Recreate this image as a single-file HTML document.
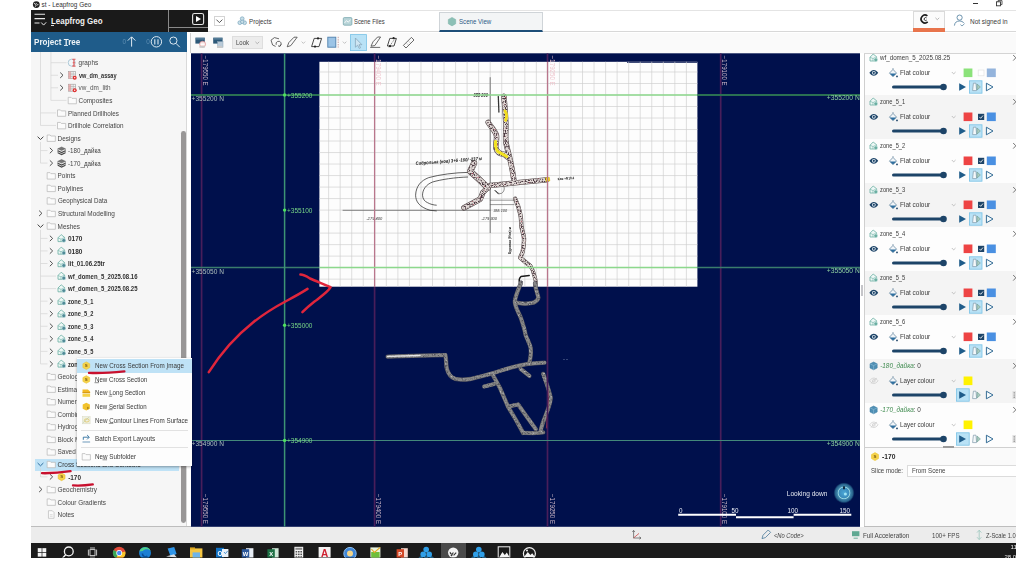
<!DOCTYPE html>
<html><head><meta charset="utf-8"><title>st - Leapfrog Geo</title>
<style>
html,body{margin:0;padding:0;background:#fff;}
body{width:1024px;height:574px;position:relative;overflow:hidden;font-family:"Liberation Sans",sans-serif;}
.t{position:absolute;white-space:nowrap;line-height:1;transform-origin:0 50%;}
.b{position:absolute;box-sizing:border-box;}
svg{position:absolute;left:0;top:0;overflow:visible;}
#wrap{position:absolute;left:0;top:0;width:1024px;height:574px;overflow:hidden;filter:blur(0.25px);}
</style></head><body><div id="wrap">

<div class="b" style="left:31.00px;top:0.00px;width:985.00px;height:10.30px;background:#ffffff;"></div>
<svg width="1024" height="574"><circle cx="36.3" cy="4.6" r="3.4" fill="#222"/><path d="M34.5 3.2a1 1 0 1 0 2 0.2M36.8 5.6l1.5-1.6M35 6.5l1.2-1" stroke="#fff" stroke-width="0.9" fill="none"/></svg>
<div class="t" style="left:41.50px;top:2.27px;font-size:6.4px;color:#333;">st - Leapfrog Geo</div>
<div class="b" style="left:972.60px;top:3.00px;width:5.00px;height:0.90px;background:#333;"></div>
<svg width="1024" height="574"><rect x="996.5" y="1.8" width="4" height="4" fill="none" stroke="#333" stroke-width="0.9"/><path d="M998 1.8v-1.2h4v4h-1.4" fill="none" stroke="#333" stroke-width="0.8"/></svg>
<div class="b" style="left:31.00px;top:10.00px;width:985.00px;height:22.40px;background:#ffffff;border-top:1px solid #e4e4e4;border-bottom:1px solid #d8d8d8;"></div>
<div class="b" style="left:31.00px;top:10.00px;width:177.40px;height:22.00px;background:#1a1a1a;"></div>
<div class="b" style="left:168.00px;top:10.00px;width:1.00px;height:22.00px;background:#8a8a8a;"></div>
<div class="b" style="left:168.00px;top:27.30px;width:40.40px;height:1.00px;background:#8a8a8a;"></div>
<svg width="1024" height="574"><path d="M34.5 14.3h10.5M34.5 18.6h10.5M34.5 23h5" stroke="#e8e8e8" stroke-width="1.1" fill="none"/><path d="M41.2 22.5l2.4 2.6l2.6-2.8" stroke="#e8e8e8" stroke-width="1" fill="none"/></svg>
<div class="t" style="left:50.80px;top:17.21px;font-size:9px;color:#f2f2f2;font-weight:bold;transform:scaleX(0.8803);">Leapfrog Geo</div>
<div class="b" style="left:51.00px;top:24.80px;width:3.20px;height:0.80px;background:#ddd;"></div>
<svg width="1024" height="574"><rect x="192.6" y="13.5" width="11" height="11" rx="1.8" fill="none" stroke="#e6e6e6" stroke-width="1.1"/><path d="M196 15.9v6.2l5-3.1z" fill="#fff"/></svg>
<div class="b" style="left:213.60px;top:16.20px;width:11.60px;height:9.60px;background:#fff;border:1px solid #d4d4d4;"></div>
<svg width="1024" height="574"><path d="M216.4 19.6l3 3l3-3" stroke="#444" stroke-width="0.9" fill="none"/></svg>
<svg width="1024" height="574"><g fill="#c9dfe8" stroke="#6a9ab5" stroke-width="0.6"><circle cx="242.2" cy="18.7" r="1.9"/><circle cx="239.8" cy="22.7" r="1.9"/><circle cx="244.6" cy="22.7" r="1.9"/><circle cx="242.2" cy="21.8" r="1.7"/></g></svg>
<div class="t" style="left:249.40px;top:18.87px;font-size:6.4px;color:#3a3a3a;transform:scaleX(0.9775);">Projects</div>
<svg width="1024" height="574"><rect x="343.3" y="17.6" width="8.6" height="7.6" rx="1" fill="#b8d4d8" stroke="#6fa0a8" stroke-width="0.7"/><path d="M344.5 23l2-2.4l1.8 1.6l2.2-2.6" stroke="#fff" stroke-width="0.8" fill="none"/></svg>
<div class="t" style="left:354.20px;top:18.87px;font-size:6.4px;color:#3a3a3a;transform:scaleX(0.9151);">Scene Files</div>
<div class="b" style="left:439.00px;top:12.00px;width:104.40px;height:20.00px;background:#f3f5f6;border:1px solid #cfd4d8;border-bottom:2px solid #1d4e78;"></div>
<svg width="1024" height="574"><path d="M452 17.4l3.7 2.1v4.3l-3.7 2.1l-3.7-2.1v-4.3z" fill="#8cc0b6" stroke="#78b0a6" stroke-width="0.5"/></svg>
<div class="t" style="left:458.80px;top:18.87px;font-size:6.4px;color:#2d5a85;transform:scaleX(0.9590);">Scene View</div>
<div class="b" style="left:913.00px;top:10.60px;width:31.60px;height:21.40px;background:#fbfbfb;border:1px solid #dadada;border-bottom:none;"></div>
<div class="b" style="left:913.00px;top:27.80px;width:31.60px;height:4.00px;background:#e8744c;"></div>
<svg width="1024" height="574"><path d="M927.4 15.9a3.9 3.9 0 1 0 0.3 6" stroke="#1c1c1c" stroke-width="1.7" fill="none"/><path d="M926.6 17.9a1.5 1.5 0 1 0 0.1 2.2" stroke="#1c1c1c" stroke-width="0.9" fill="none"/><path d="M935.4 17.8l1.9 1.9l1.9-1.9" stroke="#999" stroke-width="0.7" fill="none"/></svg>
<svg width="1024" height="574"><circle cx="959.6" cy="17.6" r="2.6" fill="none" stroke="#4a7a9a" stroke-width="0.8"/><path d="M954.4 25.6c0.4-3.4 2.4-4.6 5.2-4.6c2 0 3.4 0.8 4.2 2" fill="none" stroke="#4a7a9a" stroke-width="0.8"/><path d="M960.4 24.6l1.6 1.4l2.6-2.4" fill="none" stroke="#4a7a9a" stroke-width="0.7"/></svg>
<div class="t" style="left:970.40px;top:18.57px;font-size:6.4px;color:#3a3a3a;transform:scaleX(1.0065);">Not signed in</div>
<div class="b" style="left:31.00px;top:32.00px;width:156.00px;height:20.00px;background:#1f5c8a;"></div>
<div class="t" style="left:34.40px;top:38.45px;font-size:8.4px;color:#eef4f8;font-weight:bold;transform:scaleX(0.9648);">Project Tree</div>
<div class="b" style="left:63.80px;top:45.40px;width:4.00px;height:0.80px;background:#cfe0ec;"></div>
<div class="t" style="left:122.60px;top:39.47px;font-size:6.4px;color:#5f8fb3;">0</div>
<div class="t" style="left:146.20px;top:39.47px;font-size:6.4px;color:#5f8fb3;">0</div>
<svg width="1024" height="574"><g stroke="#dfeaf2" fill="none" stroke-width="1"><path d="M131.6 46.6v-9.6M127.8 40.6l3.8-3.8l3.8 3.8"/><circle cx="156.4" cy="41.8" r="5.2"/><path d="M154.8 39.2v5.2M158 39.2v5.2" stroke-width="1.1"/><circle cx="173.4" cy="40.6" r="3.6"/><path d="M176 43.4l3.8 3.8"/></g></svg>
<div class="b" style="left:31.00px;top:52.00px;width:156.00px;height:475.00px;background:#f6f6f6;"></div>
<div class="b" style="left:186.40px;top:52.00px;width:1.00px;height:475.00px;background:#d9d9d9;"></div>
<div class="b" style="left:187.40px;top:32.00px;width:3.00px;height:495.00px;background:#ffffff;"></div>
<div class="b" style="left:181.00px;top:131.00px;width:5.00px;height:392.00px;background:#999797;border-radius:2.4px;"></div>
<div class="b" style="left:31.00px;top:526.00px;width:160.00px;height:1.20px;background:#bdbdbd;"></div>
<div class="b" style="left:34.60px;top:459.00px;width:144.60px;height:11.80px;background:#bfe2f6;"></div>
<div class="t" style="left:78.60px;top:60.37px;font-size:6.4px;color:#444;">graphs</div>
<div class="t" style="left:78.60px;top:72.92px;font-size:6.4px;color:#303030;font-weight:bold;transform:scaleX(0.8733);">vw_dm_assay</div>
<div class="t" style="left:78.60px;top:85.47px;font-size:6.4px;color:#555;">vw_dm_lith</div>
<div class="t" style="left:78.60px;top:98.02px;font-size:6.4px;color:#444;">Composites</div>
<div class="t" style="left:68.20px;top:110.57px;font-size:6.4px;color:#444;transform:scaleX(0.9886);">Planned Drillholes</div>
<div class="t" style="left:68.20px;top:123.12px;font-size:6.4px;color:#444;transform:scaleX(0.9911);">Drillhole Correlation</div>
<div class="t" style="left:57.60px;top:135.67px;font-size:6.4px;color:#444;">Designs</div>
<div class="t" style="left:68.20px;top:148.22px;font-size:6.4px;color:#444;transform:scaleX(0.9722);">-180_дайка</div>
<div class="t" style="left:68.20px;top:160.77px;font-size:6.4px;color:#444;transform:scaleX(0.9722);">-170_дайка</div>
<div class="t" style="left:57.60px;top:173.32px;font-size:6.4px;color:#444;">Points</div>
<div class="t" style="left:57.60px;top:185.87px;font-size:6.4px;color:#444;">Polylines</div>
<div class="t" style="left:57.60px;top:198.42px;font-size:6.4px;color:#444;transform:scaleX(0.9739);">Geophysical Data</div>
<div class="t" style="left:57.60px;top:210.97px;font-size:6.4px;color:#444;transform:scaleX(1.0078);">Structural Modelling</div>
<div class="t" style="left:57.60px;top:223.52px;font-size:6.4px;color:#444;">Meshes</div>
<div class="t" style="left:68.20px;top:236.07px;font-size:6.4px;color:#303030;font-weight:bold;transform:scaleX(1.0114);">0170</div>
<div class="t" style="left:68.20px;top:248.62px;font-size:6.4px;color:#303030;font-weight:bold;transform:scaleX(1.0114);">0180</div>
<div class="t" style="left:68.20px;top:261.17px;font-size:6.4px;color:#303030;font-weight:bold;transform:scaleX(0.9541);">lit_01.06.25tr</div>
<div class="t" style="left:68.20px;top:273.72px;font-size:6.4px;color:#303030;font-weight:bold;transform:scaleX(0.9360);">wf_domen_5_2025.08.16</div>
<div class="t" style="left:68.20px;top:286.27px;font-size:6.4px;color:#303030;font-weight:bold;transform:scaleX(0.9360);">wf_domen_5_2025.08.25</div>
<div class="t" style="left:68.20px;top:298.82px;font-size:6.4px;color:#303030;font-weight:bold;transform:scaleX(0.8849);">zone_5_1</div>
<div class="t" style="left:68.20px;top:311.37px;font-size:6.4px;color:#303030;font-weight:bold;transform:scaleX(0.8849);">zone_5_2</div>
<div class="t" style="left:68.20px;top:323.92px;font-size:6.4px;color:#303030;font-weight:bold;transform:scaleX(0.8849);">zone_5_3</div>
<div class="t" style="left:68.20px;top:336.47px;font-size:6.4px;color:#303030;font-weight:bold;transform:scaleX(0.8849);">zone_5_4</div>
<div class="t" style="left:68.20px;top:349.02px;font-size:6.4px;color:#303030;font-weight:bold;transform:scaleX(0.8849);">zone_5_5</div>
<div class="t" style="left:68.20px;top:361.57px;font-size:6.4px;color:#303030;font-weight:bold;transform:scaleX(0.8849);">zone_5_6</div>
<div class="t" style="left:57.60px;top:374.12px;font-size:6.4px;color:#444;">Geological Models</div>
<div class="t" style="left:57.60px;top:386.67px;font-size:6.4px;color:#444;">Estimation</div>
<div class="t" style="left:57.60px;top:399.22px;font-size:6.4px;color:#444;">Numeric Models</div>
<div class="t" style="left:57.60px;top:411.77px;font-size:6.4px;color:#444;">Combined Models</div>
<div class="t" style="left:57.60px;top:424.32px;font-size:6.4px;color:#444;">Hydrogeology</div>
<div class="t" style="left:57.60px;top:436.87px;font-size:6.4px;color:#444;">Block Models</div>
<div class="t" style="left:57.60px;top:449.42px;font-size:6.4px;color:#444;">Saved Scenes and Movies</div>
<div class="t" style="left:57.60px;top:461.97px;font-size:6.4px;color:#333;">Cross Sections and Contours</div>
<div class="t" style="left:68.20px;top:474.52px;font-size:6.4px;color:#303030;font-weight:bold;">-170</div>
<div class="t" style="left:57.60px;top:487.07px;font-size:6.4px;color:#444;">Geochemistry</div>
<div class="t" style="left:57.60px;top:499.62px;font-size:6.4px;color:#444;">Colour Gradients</div>
<div class="t" style="left:57.60px;top:512.17px;font-size:6.4px;color:#444;">Notes</div>
<svg width="1024" height="574"><path d="M40.50 52.00V125.45" stroke="#d4d4d4" stroke-width="0.7"/><path d="M40.50 112.90H56.00" stroke="#d4d4d4" stroke-width="0.7"/><path d="M40.50 125.45H56.00" stroke="#d4d4d4" stroke-width="0.7"/><path d="M50.90 52.00V100.35" stroke="#d4d4d4" stroke-width="0.7"/><path d="M50.90 62.70H66.50" stroke="#d4d4d4" stroke-width="0.7"/><path d="M50.90 75.25H58.00" stroke="#d4d4d4" stroke-width="0.7"/><path d="M50.90 87.80H58.00" stroke="#d4d4d4" stroke-width="0.7"/><path d="M50.90 100.35H66.50" stroke="#d4d4d4" stroke-width="0.7"/><path d="M40.50 142.00V163.10" stroke="#d4d4d4" stroke-width="0.7"/><path d="M40.50 150.55H47.50" stroke="#d4d4d4" stroke-width="0.7"/><path d="M40.50 163.10H47.50" stroke="#d4d4d4" stroke-width="0.7"/><path d="M40.50 229.85V363.90" stroke="#d4d4d4" stroke-width="0.7"/><path d="M40.50 238.40H47.50" stroke="#d4d4d4" stroke-width="0.7"/><path d="M40.50 250.95H47.50" stroke="#d4d4d4" stroke-width="0.7"/><path d="M40.50 263.50H47.50" stroke="#d4d4d4" stroke-width="0.7"/><path d="M40.50 276.05H56.00" stroke="#d4d4d4" stroke-width="0.7"/><path d="M40.50 288.60H56.00" stroke="#d4d4d4" stroke-width="0.7"/><path d="M40.50 301.15H47.50" stroke="#d4d4d4" stroke-width="0.7"/><path d="M40.50 313.70H47.50" stroke="#d4d4d4" stroke-width="0.7"/><path d="M40.50 326.25H47.50" stroke="#d4d4d4" stroke-width="0.7"/><path d="M40.50 338.80H47.50" stroke="#d4d4d4" stroke-width="0.7"/><path d="M40.50 351.35H47.50" stroke="#d4d4d4" stroke-width="0.7"/><path d="M40.50 363.90H47.50" stroke="#d4d4d4" stroke-width="0.7"/><path d="M40.50 468.30V476.85" stroke="#d4d4d4" stroke-width="0.7"/><path d="M40.50 476.85H47.50" stroke="#d4d4d4" stroke-width="0.7"/><circle cx="71.70" cy="62.70" r="3.5" fill="#f2f6f8" stroke="#8fb4c8" stroke-width="0.7"/><path d="M73.90 59.30v6.8M72.30 59.30h3.2M72.30 66.10h3.2M72.70 62.70h2.4" stroke="#e06060" stroke-width="1.1" fill="none"/><path d="M60.20 72.55l2.8 2.7l-2.8 2.7" stroke="#4a4a4a" stroke-width="0.95" fill="none"/><rect x="68.50" y="71.65" width="7" height="7" fill="#f4f4f4" stroke="#9a9a9a" stroke-width="0.6"/><path d="M68.50 74.05h7M68.50 76.35h7M70.80 71.65v7M73.20 71.65v7" stroke="#9a9a9a" stroke-width="0.5"/><rect x="68.50" y="71.65" width="2.3" height="7" fill="#e7a0a0" opacity="0.8"/><circle cx="74.70" cy="77.65" r="2" fill="#e03030"/><circle cx="74.70" cy="77.65" r="0.7" fill="#fff"/><path d="M60.20 85.10l2.8 2.7l-2.8 2.7" stroke="#4a4a4a" stroke-width="0.95" fill="none"/><rect x="68.50" y="84.20" width="7" height="7" fill="#f4f4f4" stroke="#9a9a9a" stroke-width="0.6"/><path d="M68.50 86.60h7M68.50 88.90h7M70.80 84.20v7M73.20 84.20v7" stroke="#9a9a9a" stroke-width="0.5"/><rect x="68.50" y="84.20" width="2.3" height="7" fill="#e7a0a0" opacity="0.8"/><circle cx="74.70" cy="90.20" r="2" fill="#e03030"/><circle cx="74.70" cy="90.20" r="0.7" fill="#fff"/><path d="M68.20 97.35h2.9l0.9 1h4.4v5.4h-8.2z" fill="#fbfbfb" stroke="#b4b4b4" stroke-width="0.7"/><path d="M57.50 109.90h2.9l0.9 1h4.4v5.4h-8.2z" fill="#fbfbfb" stroke="#b4b4b4" stroke-width="0.7"/><path d="M57.50 122.45h2.9l0.9 1h4.4v5.4h-8.2z" fill="#fbfbfb" stroke="#b4b4b4" stroke-width="0.7"/><path d="M37.60 136.70l2.9 2.8l2.9-2.8" stroke="#444" stroke-width="1.0" fill="none"/><path d="M47.15 135.00h2.9l0.9 1h4.4v5.4h-8.2z" fill="#fbfbfb" stroke="#b4b4b4" stroke-width="0.7"/><path d="M49.85 147.85l2.8 2.7l-2.8 2.7" stroke="#4a4a4a" stroke-width="0.95" fill="none"/><path d="M57.80 148.75l3.8-1.8l3.8 1.8l-3.8 1.8z" fill="#777" stroke="#444" stroke-width="0.4"/><path d="M57.80 150.75l3.8 1.8l3.8-1.8M57.80 152.75l3.8 1.8l3.8-1.8" stroke="#444" stroke-width="1.1" fill="none"/><path d="M57.80 148.75v4M65.40 148.75v4" stroke="#555" stroke-width="0.5"/><path d="M49.85 160.40l2.8 2.7l-2.8 2.7" stroke="#4a4a4a" stroke-width="0.95" fill="none"/><path d="M57.80 161.30l3.8-1.8l3.8 1.8l-3.8 1.8z" fill="#777" stroke="#444" stroke-width="0.4"/><path d="M57.80 163.30l3.8 1.8l3.8-1.8M57.80 165.30l3.8 1.8l3.8-1.8" stroke="#444" stroke-width="1.1" fill="none"/><path d="M57.80 161.30v4M65.40 161.30v4" stroke="#555" stroke-width="0.5"/><path d="M47.15 172.65h2.9l0.9 1h4.4v5.4h-8.2z" fill="#fbfbfb" stroke="#b4b4b4" stroke-width="0.7"/><path d="M47.15 185.20h2.9l0.9 1h4.4v5.4h-8.2z" fill="#fbfbfb" stroke="#b4b4b4" stroke-width="0.7"/><path d="M47.15 197.75h2.9l0.9 1h4.4v5.4h-8.2z" fill="#fbfbfb" stroke="#b4b4b4" stroke-width="0.7"/><path d="M39.10 210.60l2.8 2.7l-2.8 2.7" stroke="#4a4a4a" stroke-width="0.95" fill="none"/><path d="M47.15 210.30h2.9l0.9 1h4.4v5.4h-8.2z" fill="#fbfbfb" stroke="#b4b4b4" stroke-width="0.7"/><path d="M37.60 224.55l2.9 2.8l2.9-2.8" stroke="#444" stroke-width="1.0" fill="none"/><path d="M47.15 222.85h2.9l0.9 1h4.4v5.4h-8.2z" fill="#fbfbfb" stroke="#b4b4b4" stroke-width="0.7"/><path d="M49.85 235.70l2.8 2.7l-2.8 2.7" stroke="#4a4a4a" stroke-width="0.95" fill="none"/><path d="M58.00 241.60v-3.8l3.2-3.2l3.4 2.8v4.2z" fill="#eef8f6" stroke="#6aaea2" stroke-width="0.8"/><path d="M58.00 237.80l3 1.4l3.6-1.8M61.00 239.20v2.4" stroke="#6aaea2" stroke-width="0.6" fill="none"/><circle cx="63.80" cy="240.40" r="1.9" fill="#4f8a96" stroke="#d6eef0" stroke-width="0.5"/><path d="M49.85 248.25l2.8 2.7l-2.8 2.7" stroke="#4a4a4a" stroke-width="0.95" fill="none"/><path d="M58.00 254.15v-3.8l3.2-3.2l3.4 2.8v4.2z" fill="#eef8f6" stroke="#6aaea2" stroke-width="0.8"/><path d="M58.00 250.35l3 1.4l3.6-1.8M61.00 251.75v2.4" stroke="#6aaea2" stroke-width="0.6" fill="none"/><circle cx="63.80" cy="252.95" r="1.9" fill="#4f8a96" stroke="#d6eef0" stroke-width="0.5"/><path d="M49.85 260.80l2.8 2.7l-2.8 2.7" stroke="#4a4a4a" stroke-width="0.95" fill="none"/><path d="M58.00 266.70v-3.8l3.2-3.2l3.4 2.8v4.2z" fill="#eef8f6" stroke="#6aaea2" stroke-width="0.8"/><path d="M58.00 262.90l3 1.4l3.6-1.8M61.00 264.30v2.4" stroke="#6aaea2" stroke-width="0.6" fill="none"/><circle cx="63.80" cy="265.50" r="1.9" fill="#4f8a96" stroke="#d6eef0" stroke-width="0.5"/><path d="M58.00 279.25v-3.8l3.2-3.2l3.4 2.8v4.2z" fill="#eef8f6" stroke="#6aaea2" stroke-width="0.8"/><path d="M58.00 275.45l3 1.4l3.6-1.8M61.00 276.85v2.4" stroke="#6aaea2" stroke-width="0.6" fill="none"/><circle cx="63.80" cy="278.05" r="1.9" fill="#4f8a96" stroke="#d6eef0" stroke-width="0.5"/><path d="M58.00 291.80v-3.8l3.2-3.2l3.4 2.8v4.2z" fill="#eef8f6" stroke="#6aaea2" stroke-width="0.8"/><path d="M58.00 288.00l3 1.4l3.6-1.8M61.00 289.40v2.4" stroke="#6aaea2" stroke-width="0.6" fill="none"/><circle cx="63.80" cy="290.60" r="1.9" fill="#4f8a96" stroke="#d6eef0" stroke-width="0.5"/><path d="M49.85 298.45l2.8 2.7l-2.8 2.7" stroke="#4a4a4a" stroke-width="0.95" fill="none"/><path d="M58.00 304.35v-3.8l3.2-3.2l3.4 2.8v4.2z" fill="#eef8f6" stroke="#6aaea2" stroke-width="0.8"/><path d="M58.00 300.55l3 1.4l3.6-1.8M61.00 301.95v2.4" stroke="#6aaea2" stroke-width="0.6" fill="none"/><circle cx="63.80" cy="303.15" r="1.9" fill="#4f8a96" stroke="#d6eef0" stroke-width="0.5"/><path d="M49.85 311.00l2.8 2.7l-2.8 2.7" stroke="#4a4a4a" stroke-width="0.95" fill="none"/><path d="M58.00 316.90v-3.8l3.2-3.2l3.4 2.8v4.2z" fill="#eef8f6" stroke="#6aaea2" stroke-width="0.8"/><path d="M58.00 313.10l3 1.4l3.6-1.8M61.00 314.50v2.4" stroke="#6aaea2" stroke-width="0.6" fill="none"/><circle cx="63.80" cy="315.70" r="1.9" fill="#4f8a96" stroke="#d6eef0" stroke-width="0.5"/><path d="M49.85 323.55l2.8 2.7l-2.8 2.7" stroke="#4a4a4a" stroke-width="0.95" fill="none"/><path d="M58.00 329.45v-3.8l3.2-3.2l3.4 2.8v4.2z" fill="#eef8f6" stroke="#6aaea2" stroke-width="0.8"/><path d="M58.00 325.65l3 1.4l3.6-1.8M61.00 327.05v2.4" stroke="#6aaea2" stroke-width="0.6" fill="none"/><circle cx="63.80" cy="328.25" r="1.9" fill="#4f8a96" stroke="#d6eef0" stroke-width="0.5"/><path d="M49.85 336.10l2.8 2.7l-2.8 2.7" stroke="#4a4a4a" stroke-width="0.95" fill="none"/><path d="M58.00 342.00v-3.8l3.2-3.2l3.4 2.8v4.2z" fill="#eef8f6" stroke="#6aaea2" stroke-width="0.8"/><path d="M58.00 338.20l3 1.4l3.6-1.8M61.00 339.60v2.4" stroke="#6aaea2" stroke-width="0.6" fill="none"/><circle cx="63.80" cy="340.80" r="1.9" fill="#4f8a96" stroke="#d6eef0" stroke-width="0.5"/><path d="M49.85 348.65l2.8 2.7l-2.8 2.7" stroke="#4a4a4a" stroke-width="0.95" fill="none"/><path d="M58.00 354.55v-3.8l3.2-3.2l3.4 2.8v4.2z" fill="#eef8f6" stroke="#6aaea2" stroke-width="0.8"/><path d="M58.00 350.75l3 1.4l3.6-1.8M61.00 352.15v2.4" stroke="#6aaea2" stroke-width="0.6" fill="none"/><circle cx="63.80" cy="353.35" r="1.9" fill="#4f8a96" stroke="#d6eef0" stroke-width="0.5"/><path d="M49.85 361.20l2.8 2.7l-2.8 2.7" stroke="#4a4a4a" stroke-width="0.95" fill="none"/><path d="M58.00 367.10v-3.8l3.2-3.2l3.4 2.8v4.2z" fill="#eef8f6" stroke="#6aaea2" stroke-width="0.8"/><path d="M58.00 363.30l3 1.4l3.6-1.8M61.00 364.70v2.4" stroke="#6aaea2" stroke-width="0.6" fill="none"/><circle cx="63.80" cy="365.90" r="1.9" fill="#4f8a96" stroke="#d6eef0" stroke-width="0.5"/><path d="M47.15 373.45h2.9l0.9 1h4.4v5.4h-8.2z" fill="#fbfbfb" stroke="#b4b4b4" stroke-width="0.7"/><path d="M47.15 386.00h2.9l0.9 1h4.4v5.4h-8.2z" fill="#fbfbfb" stroke="#b4b4b4" stroke-width="0.7"/><path d="M47.15 398.55h2.9l0.9 1h4.4v5.4h-8.2z" fill="#fbfbfb" stroke="#b4b4b4" stroke-width="0.7"/><path d="M47.15 411.10h2.9l0.9 1h4.4v5.4h-8.2z" fill="#fbfbfb" stroke="#b4b4b4" stroke-width="0.7"/><path d="M47.15 423.65h2.9l0.9 1h4.4v5.4h-8.2z" fill="#fbfbfb" stroke="#b4b4b4" stroke-width="0.7"/><path d="M47.15 436.20h2.9l0.9 1h4.4v5.4h-8.2z" fill="#fbfbfb" stroke="#b4b4b4" stroke-width="0.7"/><path d="M47.15 448.75h2.9l0.9 1h4.4v5.4h-8.2z" fill="#fbfbfb" stroke="#b4b4b4" stroke-width="0.7"/><path d="M37.60 463.00l2.9 2.8l2.9-2.8" stroke="#2f6f9f" stroke-width="1.0" fill="none"/><path d="M47.15 461.30h2.9l0.9 1h4.4v5.4h-8.2z" fill="#fbfbfb" stroke="#b4b4b4" stroke-width="0.7"/><path d="M49.85 474.15l2.8 2.7l-2.8 2.7" stroke="#4a4a4a" stroke-width="0.95" fill="none"/><path d="M61.60 473.05l3.4 1.9v3.8l-3.4 1.9l-3.4-1.9v-3.8z" fill="#f5d24a" stroke="#e8c030" stroke-width="0.6"/><text x="61.60" y="478.35" font-size="4.4" font-weight="bold" text-anchor="middle" fill="#7a5a10" font-family="Liberation Sans">S</text><path d="M39.10 486.70l2.8 2.7l-2.8 2.7" stroke="#4a4a4a" stroke-width="0.95" fill="none"/><path d="M47.15 486.40h2.9l0.9 1h4.4v5.4h-8.2z" fill="#fbfbfb" stroke="#b4b4b4" stroke-width="0.7"/><path d="M47.15 498.95h2.9l0.9 1h4.4v5.4h-8.2z" fill="#fbfbfb" stroke="#b4b4b4" stroke-width="0.7"/><path d="M48.45 510.70h3.8l1.8 1.8v5.8h-5.6z" fill="#fbfbfb" stroke="#b0b0b0" stroke-width="0.6"/><path d="M49.85 514.70h2.8M49.85 516.30h2.8" stroke="#c4c4c4" stroke-width="0.6"/></svg>
<div class="b" style="left:190.40px;top:33.00px;width:825.60px;height:20.40px;background:#fafafa;border-left:1px solid #cfcfcf;"></div>
<div class="b" style="left:232.20px;top:36.30px;width:30.40px;height:13.20px;background:#ececec;border:1px solid #dedede;"></div>
<div class="t" style="left:236.20px;top:40.47px;font-size:6.4px;color:#444;transform:scaleX(0.9367);">Look</div>
<svg width="1024" height="574"><rect x="195.4" y="37.6" width="9.4" height="6" fill="#2c5878"/><rect x="196" y="38.4" width="8.2" height="1" fill="#6f93ad"/><circle cx="202.6" cy="44.2" r="3" fill="#f4dede" stroke="#d88" stroke-width="0.6"/><rect x="200.6" y="43.5" width="4" height="1.4" fill="#fff"/><rect x="199.4" y="46" width="5.4" height="1.8" fill="#c9c9c9"/><rect x="213.2" y="37.6" width="9.4" height="6" fill="#2c5878"/><rect x="213.8" y="38.4" width="8.2" height="1" fill="#6f93ad"/><rect x="217.6" y="41.6" width="5.4" height="5.6" fill="#b9cad8" stroke="#8aa4b8" stroke-width="0.5"/><rect x="217" y="46" width="5.4" height="1.8" fill="#c9c9c9"/><rect x="350.4" y="34.6" width="16" height="16" fill="#b9e2f6" stroke="#78c2e6" stroke-width="0.8"/><path d="M355.4 38v9.2l2.2-2l1.6 3.2l1.3-0.6l-1.5-3.1h2.9z" fill="#cfe6f2" stroke="#7f9fb5" stroke-width="0.7"/><g fill="none" stroke="#444" stroke-width="0.8"><path d="M271 40.2l3.4-2.6l4.6 1.2M271 40.2l1.6 4.8l3 1.4"/><path d="M276.2 44.8a2.6 2.6 0 1 1 3.6 1.4"/><path d="M280.6 44.4l-0.6 2l-2-0.6"/></g><g fill="none" stroke="#444" stroke-width="0.8"><path d="M287.2 46.8l1.6-4.2l5.2-5.4h3.2l-6.4 8.4z"/></g><path d="M301.6 41.6l1.8 1.8l1.8-1.8" stroke="#aaa" stroke-width="0.7" fill="none"/><g fill="none" stroke="#333" stroke-width="0.9"><path d="M311.6 46.6l2.6-8.2h7.4l-2.6 8.2z"/></g><circle cx="318" cy="38.4" r="1.1" fill="#222"/><circle cx="315" cy="46.6" r="1.1" fill="#222"/><rect x="327.8" y="37.2" width="8" height="10" fill="#9cc4e6" stroke="#4f80ad" stroke-width="0.9"/><path d="M338.2 36.8v10.8" stroke="#a66" stroke-width="0.6" stroke-dasharray="1.4 1"/><path d="M342.8 41.6l1.8 1.8l1.8-1.8" stroke="#aaa" stroke-width="0.7" fill="none"/><g fill="none" stroke="#444" stroke-width="0.8"><path d="M371 46.2l2-4.4l4.6-4.8h3l-5.8 8.6zM370.2 47.4h10"/></g><g fill="none" stroke="#333" stroke-width="0.9"><path d="M387.4 46l2.4-7.6h6.6l-2.4 7.6z"/><path d="M388.8 47.2l7-9.6" stroke-dasharray="1.2 0.8" stroke-width="0.6"/></g><circle cx="393.6" cy="38.2" r="1.1" fill="#222"/><circle cx="390" cy="46.2" r="1.1" fill="#222"/><g fill="none" stroke="#444" stroke-width="0.8"><path d="M403.4 45.4l8-8l2.6 2.6l-8 8z"/><path d="M407 43.6l0.9 0.9M409 41.6l0.9 0.9" stroke-width="0.5"/></g><path d="M255.4 41.8l1.9 1.9l1.9-1.9" stroke="#999" stroke-width="0.7" fill="none"/></svg>
<svg width="1024" height="574"><defs><clipPath id="cs"><rect x="191" y="53.3" width="669" height="473.49999999999994"/></clipPath><clipPath id="ci"><rect x="319.4" y="61.8" width="378" height="224.9"/></clipPath></defs><rect x="191" y="53.3" width="669" height="473.49999999999994" fill="#00104c"/><g clip-path="url(#cs)"><rect x="319.4" y="61.8" width="378" height="224.9" fill="#fdfdfd"/><path d="M627 61.9h70.2v0.9h-70.2z" fill="#00104c"/><g clip-path="url(#ci)" stroke="#cdcdcd" stroke-width="0.65"><path d="M328.64 61V287"/><path d="M340.18 61V287"/><path d="M351.72 61V287"/><path d="M363.26 61V287"/><path d="M374.80 61V287"/><path d="M386.34 61V287"/><path d="M397.88 61V287"/><path d="M409.42 61V287"/><path d="M420.96 61V287"/><path d="M432.50 61V287"/><path d="M444.04 61V287"/><path d="M455.58 61V287"/><path d="M467.12 61V287"/><path d="M478.66 61V287"/><path d="M490.20 61V287"/><path d="M501.74 61V287"/><path d="M513.28 61V287"/><path d="M524.82 61V287"/><path d="M536.36 61V287"/><path d="M547.90 61V287"/><path d="M559.44 61V287"/><path d="M570.98 61V287"/><path d="M582.52 61V287"/><path d="M594.06 61V287"/><path d="M605.60 61V287"/><path d="M617.14 61V287"/><path d="M628.68 61V287"/><path d="M640.22 61V287"/><path d="M651.76 61V287"/><path d="M663.30 61V287"/><path d="M674.84 61V287"/><path d="M686.38 61V287"/><path d="M319 71.98H698"/><path d="M319 83.49H698"/><path d="M319 95.00H698"/><path d="M319 106.51H698"/><path d="M319 118.02H698"/><path d="M319 129.53H698"/><path d="M319 141.04H698"/><path d="M319 152.55H698"/><path d="M319 164.06H698"/><path d="M319 175.57H698"/><path d="M319 187.08H698"/><path d="M319 198.59H698"/><path d="M319 210.10H698"/><path d="M319 221.61H698"/><path d="M319 233.12H698"/><path d="M319 244.63H698"/><path d="M319 256.14H698"/><path d="M319 267.65H698"/><path d="M319 279.16H698"/></g><g clip-path="url(#ci)" fill="none" stroke-linecap="round" stroke-linejoin="round"><path d="M490.2 77.6V232.6" stroke="#777" stroke-width="1"/><path d="M343 210.3H490.2" stroke="#666" stroke-width="0.8"/><path d="M467.7 172.4C455 172.6 440 174.5 428.8 177.6C421 180.5 416 186 415.6 195.2C415.8 201.5 419 207 430.1 210.3L436.3 210.9" stroke="#3a3a3a" stroke-width="0.8"/><path d="M467.7 177C455 177.4 441 179.5 432.6 182C426 184.6 422.6 189.5 422.5 195.2C422.7 199 424.8 201.6 427.6 202.7C430.5 204.3 433.5 205 436.3 205.2" stroke="#3a3a3a" stroke-width="0.8"/><path d="M490.3 200.2H514M490.3 204.6H514" stroke="#555" stroke-width="0.6"/><path d="M496 186c2-2.6 6-2.6 7.6 0c1.4 2.6 0.4 6-2.2 7.4c-2 0.6-4.4-0.6-5.6-2.6" stroke="#444" stroke-width="0.6"/><path d="M495 190.5l3.5 3.5" stroke="#222" stroke-width="1"/><filter id="spk" filterUnits="userSpaceOnUse" x="400" y="60" width="200" height="230" color-interpolation-filters="sRGB"><feTurbulence type="fractalNoise" baseFrequency="0.75" numOctaves="2" seed="7" result="n"/><feColorMatrix in="n" type="matrix" values="0 0 0 0 0.30  0 0 0 0 0.23  0 0 0 0 0.26  5 0 0 0 -2.3" result="dk"/><feColorMatrix in="n" type="matrix" values="0 0 0 0 0.70  0 0 0 0 0.25  0 0 0 0 0.33  0 9 0 0 -6.3" result="rd"/><feComposite in="dk" in2="SourceGraphic" operator="in" result="s1"/><feComposite in="rd" in2="SourceGraphic" operator="in" result="s2"/><feMerge><feMergeNode in="SourceGraphic"/><feMergeNode in="s1"/><feMergeNode in="s2"/></feMerge></filter><path d="M503.9 96.3C504.6 104 505.4 113 505.8 122.6C506 130 505.4 136 505.8 141.5C506.6 147 508.6 153 510.4 161C512 168 513.2 175 514.1 181.4" stroke="#4e4444" stroke-width="5.5"/><path d="M488.2 122.4C491 127 495 130.5 496.4 135.2C497.2 139.5 495.4 143.5 495.8 147.7C497 152 500 154 503.9 154.2L507.5 157" stroke="#4e4444" stroke-width="5.5"/><path d="M474 163.2C473 166.5 471 169 470.2 171.4C476 176.5 482 182 487.8 187.7" stroke="#4e4444" stroke-width="6.3"/><path d="M487.8 187.7C486 189.4 484 191 482.8 192.7C482 195 481 197.4 480.3 199C475 202 469.5 205 464 207.8" stroke="#4e4444" stroke-width="5.5"/><path d="M488.5 185.6C498 184.6 510 183.4 520 182.4C530 181.4 540 180.4 546.5 179.8" stroke="#4e4444" stroke-width="5.3"/><path d="M515.2 198.8C517.4 203.5 519.2 209 520.2 213.8C521.4 218 521 222.5 521.4 226.4C522 231 524.2 235 524 238.9C524.2 243.5 523.4 247.6 522.7 251.5C522 254 520.8 256 520.2 257.7C523.4 260.6 527 263.4 530.2 265.9" stroke="#4e4444" stroke-width="4.3"/><path d="M530.2 265.9C532 268 533 270.4 533.4 272.5C534.6 276 535.6 279.5 535.9 282.6L535.4 286" stroke="#4e4444" stroke-width="3.9"/><g filter="url(#spk)"><path d="M503.9 96.3C504.6 104 505.4 113 505.8 122.6C506 130 505.4 136 505.8 141.5C506.6 147 508.6 153 510.4 161C512 168 513.2 175 514.1 181.4" stroke="#e2dad7" stroke-width="4.4"/><path d="M488.2 122.4C491 127 495 130.5 496.4 135.2C497.2 139.5 495.4 143.5 495.8 147.7C497 152 500 154 503.9 154.2L507.5 157" stroke="#e2dad7" stroke-width="4.4"/><path d="M474 163.2C473 166.5 471 169 470.2 171.4C476 176.5 482 182 487.8 187.7" stroke="#e2dad7" stroke-width="5.2"/><path d="M487.8 187.7C486 189.4 484 191 482.8 192.7C482 195 481 197.4 480.3 199C475 202 469.5 205 464 207.8" stroke="#e2dad7" stroke-width="4.4"/><path d="M488.5 185.6C498 184.6 510 183.4 520 182.4C530 181.4 540 180.4 546.5 179.8" stroke="#e2dad7" stroke-width="4.2"/><path d="M515.2 198.8C517.4 203.5 519.2 209 520.2 213.8C521.4 218 521 222.5 521.4 226.4C522 231 524.2 235 524 238.9C524.2 243.5 523.4 247.6 522.7 251.5C522 254 520.8 256 520.2 257.7C523.4 260.6 527 263.4 530.2 265.9" stroke="#e2dad7" stroke-width="3.2"/><path d="M530.2 265.9C532 268 533 270.4 533.4 272.5C534.6 276 535.6 279.5 535.9 282.6L535.4 286" stroke="#e2dad7" stroke-width="2.8"/></g><path d="M498.3 96.5L498.9 112" stroke="#333" stroke-width="1.3" stroke-dasharray="1.5 0.5"/><path d="M519.6 283.5c-0.8-2.8-0.2-5.6 1.4-7l8.2-0.9" stroke="#1a1a1a" stroke-width="1.5"/><path d="M505 111c1.6 2.4 1.8 6.6 0.6 9.4" stroke="#f2dc1c" stroke-width="2.8"/><path d="M495.6 141.5C495.2 145 495.8 149 497.8 151.6C500.4 153.4 504 154.2 506.8 156.6" stroke="#f2e320" stroke-width="3"/><rect x="546" y="177.6" width="3.6" height="3.6" fill="#f2d818" stroke="#c9a000" stroke-width="0.4" transform="rotate(-8 547.8 179.4)"/></g><text x="473.6" y="97.4" font-size="4.8" fill="#222" font-family="Liberation Sans" font-style="italic" font-weight="bold" textLength="14.4" lengthAdjust="spacingAndGlyphs">355 200</text><text x="493.4" y="212" font-size="4.4" fill="#333" font-family="Liberation Sans" font-style="italic" textLength="13.6" lengthAdjust="spacingAndGlyphs">355 100</text><text x="481.4" y="220.2" font-size="4.4" fill="#333" font-family="Liberation Sans" font-style="italic" textLength="15.6" lengthAdjust="spacingAndGlyphs">-179 300</text><text x="366.4" y="220" font-size="4.4" fill="#333" font-family="Liberation Sans" font-style="italic" textLength="15.8" lengthAdjust="spacingAndGlyphs">-179 400</text><text x="415.8" y="165" font-size="4.8" fill="#111" font-family="Liberation Sans" font-style="italic" font-weight="bold" textLength="66.5" lengthAdjust="spacingAndGlyphs" transform="rotate(-4.2 415.8 165)">Сидрольна (нов) 3+6 -160/ -237 м</text><text x="511.2" y="254" font-size="3.6" fill="#222" font-family="Liberation Sans" font-weight="bold" textLength="27" lengthAdjust="spacingAndGlyphs" transform="rotate(-90 511.2 254)">Буровая (Нов) м</text><text x="557.8" y="180.2" font-size="3.4" fill="#111" font-family="Liberation Sans" font-weight="bold" textLength="16.4" lengthAdjust="spacingAndGlyphs" transform="rotate(-4 557.8 180.2)">Кам +8/10.4</text><filter id="spk2" filterUnits="userSpaceOnUse" x="380" y="275" width="180" height="165" color-interpolation-filters="sRGB"><feTurbulence type="fractalNoise" baseFrequency="0.55" numOctaves="2" seed="11" result="n"/><feColorMatrix in="n" type="matrix" values="0 0 0 0 0.33  0 0 0 0 0.33  0 0 0 0 0.36  4 0 0 0 -1.9" result="dk"/><feColorMatrix in="n" type="matrix" values="0 0 0 0 0.72  0 0 0 0 0.72  0 0 0 0 0.72  0 5 0 0 -3.1" result="lt"/><feComposite in="dk" in2="SourceGraphic" operator="in" result="s1"/><feComposite in="lt" in2="SourceGraphic" operator="in" result="s2"/><feMerge><feMergeNode in="SourceGraphic"/><feMergeNode in="s1"/><feMergeNode in="s2"/></feMerge></filter><g fill="none" stroke-linecap="round" stroke-linejoin="round"><path d="M387.6 356.6L420 355.6L445.3 355.1" stroke="#4a4c58" stroke-width="4.3"/><path d="M445.3 355.1C446.4 359 446 363 446.6 367.7C448 373.5 451 377.6 455.3 378.9C460 380 465 379.8 470.4 379C477 377.6 484 375.6 490.5 373.9C497 371.8 504 369.6 510.6 367.7C516.6 366 522.6 364.8 528.1 363.9L544.5 362.6" stroke="#4a4c58" stroke-width="4.3"/><path d="M521 282.6C520 286 515.4 295 514.8 301.4C515 307 518.6 312.4 520.8 317.7C523 324 524.6 329 525.6 335C527.4 339.6 529.6 343.6 530.6 347.6C531.2 352 530.8 357 529.4 362.6" stroke="#4a4c58" stroke-width="4.3"/><path d="M517 302.7C522 304 528.6 303.8 533.4 302.7C536 301.6 538 300 538.4 297.7C537.6 294 535.8 290 535 283.4" stroke="#4a4c58" stroke-width="4.3"/><path d="M493 375.2L500 388L508 406.6L516 420L523.1 432.9" stroke="#4a4c58" stroke-width="4.3"/><path d="M484.2 386.5L494.2 384" stroke="#4a4c58" stroke-width="4.3"/><path d="M508 406.6L518.1 404.5L527 417L535.7 429.1" stroke="#4a4c58" stroke-width="4.3"/><path d="M523.1 432.9L533 433.2L543.2 432.4" stroke="#4a4c58" stroke-width="4.3"/><path d="M543.2 373.9C545.6 381 549 389.5 550.7 397.8C550.4 404 547.6 410 545.7 415.3C543.6 420.6 541.6 425.6 540.7 430.4" stroke="#4a4c58" stroke-width="4.3"/><path d="M520.6 368.9L529.4 375.9" stroke="#4a4c58" stroke-width="4.3"/><g filter="url(#spk2)"><path d="M387.6 356.6L420 355.6L445.3 355.1" stroke="#888888" stroke-width="3.4"/><path d="M445.3 355.1C446.4 359 446 363 446.6 367.7C448 373.5 451 377.6 455.3 378.9C460 380 465 379.8 470.4 379C477 377.6 484 375.6 490.5 373.9C497 371.8 504 369.6 510.6 367.7C516.6 366 522.6 364.8 528.1 363.9L544.5 362.6" stroke="#888888" stroke-width="3.4"/><path d="M521 282.6C520 286 515.4 295 514.8 301.4C515 307 518.6 312.4 520.8 317.7C523 324 524.6 329 525.6 335C527.4 339.6 529.6 343.6 530.6 347.6C531.2 352 530.8 357 529.4 362.6" stroke="#888888" stroke-width="3.4"/><path d="M517 302.7C522 304 528.6 303.8 533.4 302.7C536 301.6 538 300 538.4 297.7C537.6 294 535.8 290 535 283.4" stroke="#888888" stroke-width="3.4"/><path d="M493 375.2L500 388L508 406.6L516 420L523.1 432.9" stroke="#888888" stroke-width="3.4"/><path d="M484.2 386.5L494.2 384" stroke="#888888" stroke-width="3.4"/><path d="M508 406.6L518.1 404.5L527 417L535.7 429.1" stroke="#888888" stroke-width="3.4"/><path d="M523.1 432.9L533 433.2L543.2 432.4" stroke="#888888" stroke-width="3.4"/><path d="M543.2 373.9C545.6 381 549 389.5 550.7 397.8C550.4 404 547.6 410 545.7 415.3C543.6 420.6 541.6 425.6 540.7 430.4" stroke="#888888" stroke-width="3.4"/><path d="M520.6 368.9L529.4 375.9" stroke="#888888" stroke-width="3.4"/></g><path d="M387.6 356.4L420 355.5" stroke="#e6e6e6" stroke-width="1.4"/><path d="M547.6 388C549 398 547.4 414 546.4 428" stroke="#c23a4a" stroke-width="0.8"/></g><circle cx="564" cy="359.6" r="0.5" fill="#8899bb"/><circle cx="567" cy="359.6" r="0.5" fill="#8899bb"/><path d="M201.6 53.3V526.8" stroke="#481e5a" stroke-width="1.7"/><path d="M374.6 53.3V61.8M374.6 286.7V526.8" stroke="#481e5a" stroke-width="1.7"/><path d="M374.6 61.8V286.7" stroke="#b9768c" stroke-width="1.3"/><path d="M547.5 53.3V61.8M547.5 286.7V526.8" stroke="#481e5a" stroke-width="1.7"/><path d="M547.5 61.8V286.7" stroke="#b9768c" stroke-width="1.3"/><path d="M720.7 53.3V526.8" stroke="#481e5a" stroke-width="1.7"/><path d="M191 95.0H319.4M697.2 95.0H860" stroke="#2a7052" stroke-width="2.0"/><path d="M319.4 95.0H697.2" stroke="#8cd88c" stroke-width="1.6"/><path d="M191 267.5H319.4M697.2 267.5H860" stroke="#3a7c6c" stroke-width="1.4"/><path d="M319.4 267.5H697.2" stroke="#8cd88c" stroke-width="1.6"/><path d="M191 440.5H860" stroke="#43897a" stroke-width="1.2"/><path d="M284.6 53.3V526.8" stroke="#3c9474" stroke-width="1.5"/><circle cx="284.6" cy="95.0" r="1.7" fill="#4fe060"/><text x="287" y="97.9" font-size="6.3" fill="#76d486" font-family="Liberation Sans" textLength="25.5" lengthAdjust="spacingAndGlyphs">+355200</text><circle cx="284.6" cy="210.1" r="1.7" fill="#4fe060"/><text x="287" y="213.0" font-size="6.3" fill="#76d486" font-family="Liberation Sans" textLength="25.5" lengthAdjust="spacingAndGlyphs">+355100</text><circle cx="284.6" cy="325.2" r="1.7" fill="#4fe060"/><text x="287" y="328.09999999999997" font-size="6.3" fill="#76d486" font-family="Liberation Sans" textLength="25.5" lengthAdjust="spacingAndGlyphs">+355000</text><circle cx="284.6" cy="440.4" r="1.7" fill="#4fe060"/><text x="287" y="443.29999999999995" font-size="6.3" fill="#76d486" font-family="Liberation Sans" textLength="25.5" lengthAdjust="spacingAndGlyphs">+354900</text><text x="191.6" y="101.0" font-size="6.3" fill="#aebfbc" font-family="Liberation Sans" textLength="32.4" lengthAdjust="spacingAndGlyphs">+355200 N</text><text x="826.8" y="100.4" font-size="6.3" fill="#8fd0a0" font-family="Liberation Sans" textLength="33" lengthAdjust="spacingAndGlyphs">+355200 N</text><text x="191.6" y="273.6" font-size="6.3" fill="#aebfbc" font-family="Liberation Sans" textLength="32.4" lengthAdjust="spacingAndGlyphs">+355050 N</text><text x="826.8" y="273.0" font-size="6.3" fill="#8fd0a0" font-family="Liberation Sans" textLength="33" lengthAdjust="spacingAndGlyphs">+355050 N</text><text x="191.6" y="446.4" font-size="6.3" fill="#aebfbc" font-family="Liberation Sans" textLength="32.4" lengthAdjust="spacingAndGlyphs">+354900 N</text><text x="826.8" y="445.79999999999995" font-size="6.3" fill="#8fd0a0" font-family="Liberation Sans" textLength="33" lengthAdjust="spacingAndGlyphs">+354900 N</text><text x="203.2" y="55.7" font-size="6.3" fill="#c9b4c4" font-family="Liberation Sans" textLength="30" lengthAdjust="spacingAndGlyphs" transform="rotate(90 203.2 55.7)">−179550 E</text><text x="203.2" y="494" font-size="6.3" fill="#c9b4c4" font-family="Liberation Sans" textLength="30" lengthAdjust="spacingAndGlyphs" transform="rotate(90 203.2 494)">−179550 E</text><text x="376.40000000000003" y="55.7" font-size="6.3" fill="#efc6ce" font-family="Liberation Sans" textLength="30" lengthAdjust="spacingAndGlyphs" transform="rotate(90 376.40000000000003 55.7)">−179400 E</text><text x="376.40000000000003" y="494" font-size="6.3" fill="#c9b4c4" font-family="Liberation Sans" textLength="30" lengthAdjust="spacingAndGlyphs" transform="rotate(90 376.40000000000003 494)">−179400 E</text><text x="549.6" y="55.7" font-size="6.3" fill="#efc6ce" font-family="Liberation Sans" textLength="30" lengthAdjust="spacingAndGlyphs" transform="rotate(90 549.6 55.7)">−179250 E</text><text x="549.6" y="494" font-size="6.3" fill="#c9b4c4" font-family="Liberation Sans" textLength="30" lengthAdjust="spacingAndGlyphs" transform="rotate(90 549.6 494)">−179250 E</text><text x="722.4" y="55.7" font-size="6.3" fill="#c9b4c4" font-family="Liberation Sans" textLength="30" lengthAdjust="spacingAndGlyphs" transform="rotate(90 722.4 55.7)">−179100 E</text><text x="722.4" y="494" font-size="6.3" fill="#c9b4c4" font-family="Liberation Sans" textLength="30" lengthAdjust="spacingAndGlyphs" transform="rotate(90 722.4 494)">−179100 E</text><text x="786.8" y="495.8" font-size="6.5" fill="#e4e8f0" font-family="Liberation Sans" textLength="40.6" lengthAdjust="spacingAndGlyphs">Looking down</text><defs><radialGradient id="cg" cx="0.5" cy="0.5" r="0.5"><stop offset="0" stop-color="#4aa6d6"/><stop offset="0.48" stop-color="#3c8cbc"/><stop offset="0.56" stop-color="#9cd8e2"/><stop offset="0.64" stop-color="#3f86ac"/><stop offset="0.85" stop-color="#2f7096" stop-opacity="0.85"/><stop offset="1" stop-color="#205a80" stop-opacity="0.1"/></radialGradient></defs><circle cx="844" cy="492.9" r="10.4" fill="url(#cg)"/><circle cx="845.4" cy="494" r="1.5" fill="#9fe4f4"/><path d="M844 486.2v3" stroke="#0b2036" stroke-width="1.8"/><path d="M678.2 514.8H736M793.6 514.8H851.3" stroke="#fff" stroke-width="2"/><path d="M736 517.2H793.6" stroke="#fff" stroke-width="2"/><text x="679" y="512.6" font-size="6.3" fill="#e8ecf4" font-family="Liberation Sans" >0</text><text x="731.6" y="512.6" font-size="6.3" fill="#e8ecf4" font-family="Liberation Sans" >50</text><text x="787.6" y="512.6" font-size="6.3" fill="#e8ecf4" font-family="Liberation Sans" >100</text><text x="839.6" y="512.6" font-size="6.3" fill="#e8ecf4" font-family="Liberation Sans" >150</text><g fill="none" stroke="#e0263c" stroke-width="2.5" stroke-linecap="round" stroke-linejoin="round"><path d="M208.8 372.2C221 353 236 336 252.7 322.8C263 314.4 274 307.6 285.4 301.5C293 297.4 300.6 293.4 307.5 288.9"/><path d="M300.4 274.6C303 274.6 306 276 310 278.5C317 281.6 324.6 284.4 330.6 287.2C328 292 321 296.6 314.5 301.5C310 305 306 308.6 302.4 312.2"/></g></g></svg>
<div class="b" style="left:860.00px;top:53.00px;width:3.60px;height:474.00px;background:#ffffff;"></div>
<div class="b" style="left:863.60px;top:53.00px;width:152.40px;height:474.00px;background:#fdfdfd;border-left:1px solid #cfcfcf;"></div>
<div class="b" style="left:863.60px;top:53.00px;width:152.40px;height:1.00px;background:#d4d4d4;"></div>
<div class="t" style="left:880.20px;top:55.47px;font-size:6.4px;color:#3c3c3c;transform:scaleX(0.9732);">wf_domen_5_2025.08.25</div>
<div class="t" style="left:900.00px;top:70.31px;font-size:6.5px;color:#3c3c3c;transform:scaleX(0.9952);">Flat colour</div>
<div class="b" style="left:864.60px;top:94.80px;width:151.40px;height:44.00px;background:#f4f4f4;"></div>
<div class="t" style="left:880.20px;top:99.47px;font-size:6.4px;color:#3c3c3c;transform:scaleX(0.8998);">zone_5_1</div>
<div class="t" style="left:900.00px;top:114.31px;font-size:6.5px;color:#3c3c3c;transform:scaleX(0.9952);">Flat colour</div>
<div class="t" style="left:880.20px;top:143.47px;font-size:6.4px;color:#3c3c3c;transform:scaleX(0.8998);">zone_5_2</div>
<div class="t" style="left:900.00px;top:158.31px;font-size:6.5px;color:#3c3c3c;transform:scaleX(0.9952);">Flat colour</div>
<div class="b" style="left:864.60px;top:182.80px;width:151.40px;height:44.00px;background:#f4f4f4;"></div>
<div class="t" style="left:880.20px;top:187.47px;font-size:6.4px;color:#3c3c3c;transform:scaleX(0.8998);">zone_5_3</div>
<div class="t" style="left:900.00px;top:202.31px;font-size:6.5px;color:#3c3c3c;transform:scaleX(0.9952);">Flat colour</div>
<div class="t" style="left:880.20px;top:231.47px;font-size:6.4px;color:#3c3c3c;transform:scaleX(0.8998);">zone_5_4</div>
<div class="t" style="left:900.00px;top:246.31px;font-size:6.5px;color:#3c3c3c;transform:scaleX(0.9952);">Flat colour</div>
<div class="b" style="left:864.60px;top:270.80px;width:151.40px;height:44.00px;background:#f4f4f4;"></div>
<div class="t" style="left:880.20px;top:275.47px;font-size:6.4px;color:#3c3c3c;transform:scaleX(0.8998);">zone_5_5</div>
<div class="t" style="left:900.00px;top:290.31px;font-size:6.5px;color:#3c3c3c;transform:scaleX(0.9952);">Flat colour</div>
<div class="t" style="left:880.20px;top:319.47px;font-size:6.4px;color:#3c3c3c;transform:scaleX(0.8998);">zone_5_6</div>
<div class="t" style="left:900.00px;top:334.31px;font-size:6.5px;color:#3c3c3c;transform:scaleX(0.9952);">Flat colour</div>
<div class="b" style="left:864.60px;top:358.80px;width:151.40px;height:44.00px;background:#f4f4f4;"></div>
<div class="t" style="left:880.20px;top:363.47px;font-size:6.4px;color:#3d8a4d;font-style:italic;">-180_дайка<span style="color:#3c3c3c;font-style:normal">: 0</span></div>
<div class="t" style="left:900.00px;top:378.31px;font-size:6.5px;color:#3c3c3c;transform:scaleX(0.9673);">Layer colour</div>
<div class="t" style="left:880.20px;top:407.47px;font-size:6.4px;color:#3d8a4d;font-style:italic;">-170_дайка<span style="color:#3c3c3c;font-style:normal">: 0</span></div>
<div class="t" style="left:900.00px;top:422.31px;font-size:6.5px;color:#3c3c3c;transform:scaleX(0.9673);">Layer colour</div>
<svg width="1024" height="574"><path d="M870.00 61.00v-3.8l3.2-3.2l3.4 2.8v4.2z" fill="#eef8f6" stroke="#6aaea2" stroke-width="0.8"/><path d="M870.00 57.20l3 1.4l3.6-1.8M873.00 58.60v2.4" stroke="#6aaea2" stroke-width="0.6" fill="none"/><circle cx="875.80" cy="59.80" r="1.9" fill="#6aaea2" stroke="#e6f4f2" stroke-width="0.5"/><path d="M1013.2 55.00l2.6 2.8l-2.6 2.8" stroke="#555" stroke-width="0.8" fill="none"/><path d="M869.40 72.80c2.4-3.9 6.4-3.9 8.8 0c-2.4 3.9-6.4 3.9-8.8 0z" fill="#1d4468"/><circle cx="873.80" cy="72.80" r="1.9" fill="#e6eef4"/><circle cx="873.80" cy="72.80" r="1.1" fill="#1d4468"/><path d="M889.40 73.20l3.6-3.8l3.6 3.8l-3.6 3.4z" fill="#f2f6f9" stroke="#5d7f99" stroke-width="0.7"/><path d="M889.60 73.40h6.8l-3.4 3.2z" fill="#2f6f9f"/><path d="M893.00 69.40v-1.4" stroke="#5d7f99" stroke-width="0.7"/><circle cx="897.00" cy="76.40" r="0.9" fill="#1d4468"/><path d="M951.8 72.00l1.9 1.9l1.9-1.9" stroke="#aaa" stroke-width="0.7" fill="none"/><rect x="963.6" y="68.50" width="8.8" height="8.6" fill="#8be27a"/><rect x="978.2" y="70.00" width="5.8" height="5.8" fill="#fff" stroke="#e2e2e2" stroke-width="0.7"/><rect x="986.8" y="68.50" width="9" height="8.6" fill="#94b4dc"/><path d="M893.6 87.00H943.50" stroke="#1d4468" stroke-width="3.2" stroke-linecap="round"/><circle cx="943.50" cy="87.00" r="3.3" fill="#1d4468"/><rect x="969.4" y="80.80" width="12.6" height="12.4" fill="#b9e2f6" stroke="#78c2e6" stroke-width="0.8"/><path d="M959.2 83.20v7.6l6.8-3.8z" fill="#1f5c8a"/><path d="M972.6 90.60l0.8-7.4h2.6l0.6 7.4z" fill="#f4f8fa" stroke="#7f99ab" stroke-width="0.7"/><path d="M977 84.00l3.4 3l-3.4 3z" fill="#a9c9bf" stroke="#6f9f93" stroke-width="0.6"/><path d="M986.4 83.20v7.6l6.6-3.8z" fill="#f4fafc" stroke="#1f5c8a" stroke-width="0.9" stroke-linejoin="round"/><path d="M870.00 105.00v-3.8l3.2-3.2l3.4 2.8v4.2z" fill="#eef8f6" stroke="#6aaea2" stroke-width="0.8"/><path d="M870.00 101.20l3 1.4l3.6-1.8M873.00 102.60v2.4" stroke="#6aaea2" stroke-width="0.6" fill="none"/><circle cx="875.80" cy="103.80" r="1.9" fill="#6aaea2" stroke="#e6f4f2" stroke-width="0.5"/><path d="M1013.2 99.00l2.6 2.8l-2.6 2.8" stroke="#555" stroke-width="0.8" fill="none"/><path d="M869.40 116.80c2.4-3.9 6.4-3.9 8.8 0c-2.4 3.9-6.4 3.9-8.8 0z" fill="#1d4468"/><circle cx="873.80" cy="116.80" r="1.9" fill="#e6eef4"/><circle cx="873.80" cy="116.80" r="1.1" fill="#1d4468"/><path d="M889.40 117.20l3.6-3.8l3.6 3.8l-3.6 3.4z" fill="#f2f6f9" stroke="#5d7f99" stroke-width="0.7"/><path d="M889.60 117.40h6.8l-3.4 3.2z" fill="#2f6f9f"/><path d="M893.00 113.40v-1.4" stroke="#5d7f99" stroke-width="0.7"/><circle cx="897.00" cy="120.40" r="0.9" fill="#1d4468"/><path d="M951.8 116.00l1.9 1.9l1.9-1.9" stroke="#aaa" stroke-width="0.7" fill="none"/><rect x="963.6" y="112.50" width="8.8" height="8.6" fill="#ee4444"/><rect x="978" y="113.80" width="6.2" height="6.2" fill="#1d4468"/><path d="M979.4 116.90l1.3 1.4l2.3-2.8" stroke="#fff" stroke-width="0.8" fill="none"/><rect x="986.8" y="112.50" width="9" height="8.6" fill="#4a90e2"/><path d="M893.6 131.00H943.50" stroke="#1d4468" stroke-width="3.2" stroke-linecap="round"/><circle cx="943.50" cy="131.00" r="3.3" fill="#1d4468"/><rect x="969.4" y="124.80" width="12.6" height="12.4" fill="#b9e2f6" stroke="#78c2e6" stroke-width="0.8"/><path d="M959.2 127.20v7.6l6.8-3.8z" fill="#1f5c8a"/><path d="M972.6 134.60l0.8-7.4h2.6l0.6 7.4z" fill="#f4f8fa" stroke="#7f99ab" stroke-width="0.7"/><path d="M977 128.00l3.4 3l-3.4 3z" fill="#a9c9bf" stroke="#6f9f93" stroke-width="0.6"/><path d="M986.4 127.20v7.6l6.6-3.8z" fill="#f4fafc" stroke="#1f5c8a" stroke-width="0.9" stroke-linejoin="round"/><path d="M870.00 149.00v-3.8l3.2-3.2l3.4 2.8v4.2z" fill="#eef8f6" stroke="#6aaea2" stroke-width="0.8"/><path d="M870.00 145.20l3 1.4l3.6-1.8M873.00 146.60v2.4" stroke="#6aaea2" stroke-width="0.6" fill="none"/><circle cx="875.80" cy="147.80" r="1.9" fill="#6aaea2" stroke="#e6f4f2" stroke-width="0.5"/><path d="M1013.2 143.00l2.6 2.8l-2.6 2.8" stroke="#555" stroke-width="0.8" fill="none"/><path d="M869.40 160.80c2.4-3.9 6.4-3.9 8.8 0c-2.4 3.9-6.4 3.9-8.8 0z" fill="#1d4468"/><circle cx="873.80" cy="160.80" r="1.9" fill="#e6eef4"/><circle cx="873.80" cy="160.80" r="1.1" fill="#1d4468"/><path d="M889.40 161.20l3.6-3.8l3.6 3.8l-3.6 3.4z" fill="#f2f6f9" stroke="#5d7f99" stroke-width="0.7"/><path d="M889.60 161.40h6.8l-3.4 3.2z" fill="#2f6f9f"/><path d="M893.00 157.40v-1.4" stroke="#5d7f99" stroke-width="0.7"/><circle cx="897.00" cy="164.40" r="0.9" fill="#1d4468"/><path d="M951.8 160.00l1.9 1.9l1.9-1.9" stroke="#aaa" stroke-width="0.7" fill="none"/><rect x="963.6" y="156.50" width="8.8" height="8.6" fill="#ee4444"/><rect x="978" y="157.80" width="6.2" height="6.2" fill="#1d4468"/><path d="M979.4 160.90l1.3 1.4l2.3-2.8" stroke="#fff" stroke-width="0.8" fill="none"/><rect x="986.8" y="156.50" width="9" height="8.6" fill="#4a90e2"/><path d="M893.6 175.00H943.50" stroke="#1d4468" stroke-width="3.2" stroke-linecap="round"/><circle cx="943.50" cy="175.00" r="3.3" fill="#1d4468"/><rect x="969.4" y="168.80" width="12.6" height="12.4" fill="#b9e2f6" stroke="#78c2e6" stroke-width="0.8"/><path d="M959.2 171.20v7.6l6.8-3.8z" fill="#1f5c8a"/><path d="M972.6 178.60l0.8-7.4h2.6l0.6 7.4z" fill="#f4f8fa" stroke="#7f99ab" stroke-width="0.7"/><path d="M977 172.00l3.4 3l-3.4 3z" fill="#a9c9bf" stroke="#6f9f93" stroke-width="0.6"/><path d="M986.4 171.20v7.6l6.6-3.8z" fill="#f4fafc" stroke="#1f5c8a" stroke-width="0.9" stroke-linejoin="round"/><path d="M870.00 193.00v-3.8l3.2-3.2l3.4 2.8v4.2z" fill="#eef8f6" stroke="#6aaea2" stroke-width="0.8"/><path d="M870.00 189.20l3 1.4l3.6-1.8M873.00 190.60v2.4" stroke="#6aaea2" stroke-width="0.6" fill="none"/><circle cx="875.80" cy="191.80" r="1.9" fill="#6aaea2" stroke="#e6f4f2" stroke-width="0.5"/><path d="M1013.2 187.00l2.6 2.8l-2.6 2.8" stroke="#555" stroke-width="0.8" fill="none"/><path d="M869.40 204.80c2.4-3.9 6.4-3.9 8.8 0c-2.4 3.9-6.4 3.9-8.8 0z" fill="#1d4468"/><circle cx="873.80" cy="204.80" r="1.9" fill="#e6eef4"/><circle cx="873.80" cy="204.80" r="1.1" fill="#1d4468"/><path d="M889.40 205.20l3.6-3.8l3.6 3.8l-3.6 3.4z" fill="#f2f6f9" stroke="#5d7f99" stroke-width="0.7"/><path d="M889.60 205.40h6.8l-3.4 3.2z" fill="#2f6f9f"/><path d="M893.00 201.40v-1.4" stroke="#5d7f99" stroke-width="0.7"/><circle cx="897.00" cy="208.40" r="0.9" fill="#1d4468"/><path d="M951.8 204.00l1.9 1.9l1.9-1.9" stroke="#aaa" stroke-width="0.7" fill="none"/><rect x="963.6" y="200.50" width="8.8" height="8.6" fill="#ee4444"/><rect x="978" y="201.80" width="6.2" height="6.2" fill="#1d4468"/><path d="M979.4 204.90l1.3 1.4l2.3-2.8" stroke="#fff" stroke-width="0.8" fill="none"/><rect x="986.8" y="200.50" width="9" height="8.6" fill="#4a90e2"/><path d="M893.6 219.00H943.50" stroke="#1d4468" stroke-width="3.2" stroke-linecap="round"/><circle cx="943.50" cy="219.00" r="3.3" fill="#1d4468"/><rect x="969.4" y="212.80" width="12.6" height="12.4" fill="#b9e2f6" stroke="#78c2e6" stroke-width="0.8"/><path d="M959.2 215.20v7.6l6.8-3.8z" fill="#1f5c8a"/><path d="M972.6 222.60l0.8-7.4h2.6l0.6 7.4z" fill="#f4f8fa" stroke="#7f99ab" stroke-width="0.7"/><path d="M977 216.00l3.4 3l-3.4 3z" fill="#a9c9bf" stroke="#6f9f93" stroke-width="0.6"/><path d="M986.4 215.20v7.6l6.6-3.8z" fill="#f4fafc" stroke="#1f5c8a" stroke-width="0.9" stroke-linejoin="round"/><path d="M870.00 237.00v-3.8l3.2-3.2l3.4 2.8v4.2z" fill="#eef8f6" stroke="#6aaea2" stroke-width="0.8"/><path d="M870.00 233.20l3 1.4l3.6-1.8M873.00 234.60v2.4" stroke="#6aaea2" stroke-width="0.6" fill="none"/><circle cx="875.80" cy="235.80" r="1.9" fill="#6aaea2" stroke="#e6f4f2" stroke-width="0.5"/><path d="M1013.2 231.00l2.6 2.8l-2.6 2.8" stroke="#555" stroke-width="0.8" fill="none"/><path d="M869.40 248.80c2.4-3.9 6.4-3.9 8.8 0c-2.4 3.9-6.4 3.9-8.8 0z" fill="#1d4468"/><circle cx="873.80" cy="248.80" r="1.9" fill="#e6eef4"/><circle cx="873.80" cy="248.80" r="1.1" fill="#1d4468"/><path d="M889.40 249.20l3.6-3.8l3.6 3.8l-3.6 3.4z" fill="#f2f6f9" stroke="#5d7f99" stroke-width="0.7"/><path d="M889.60 249.40h6.8l-3.4 3.2z" fill="#2f6f9f"/><path d="M893.00 245.40v-1.4" stroke="#5d7f99" stroke-width="0.7"/><circle cx="897.00" cy="252.40" r="0.9" fill="#1d4468"/><path d="M951.8 248.00l1.9 1.9l1.9-1.9" stroke="#aaa" stroke-width="0.7" fill="none"/><rect x="963.6" y="244.50" width="8.8" height="8.6" fill="#ee4444"/><rect x="978" y="245.80" width="6.2" height="6.2" fill="#1d4468"/><path d="M979.4 248.90l1.3 1.4l2.3-2.8" stroke="#fff" stroke-width="0.8" fill="none"/><rect x="986.8" y="244.50" width="9" height="8.6" fill="#4a90e2"/><path d="M893.6 263.00H943.50" stroke="#1d4468" stroke-width="3.2" stroke-linecap="round"/><circle cx="943.50" cy="263.00" r="3.3" fill="#1d4468"/><rect x="969.4" y="256.80" width="12.6" height="12.4" fill="#b9e2f6" stroke="#78c2e6" stroke-width="0.8"/><path d="M959.2 259.20v7.6l6.8-3.8z" fill="#1f5c8a"/><path d="M972.6 266.60l0.8-7.4h2.6l0.6 7.4z" fill="#f4f8fa" stroke="#7f99ab" stroke-width="0.7"/><path d="M977 260.00l3.4 3l-3.4 3z" fill="#a9c9bf" stroke="#6f9f93" stroke-width="0.6"/><path d="M986.4 259.20v7.6l6.6-3.8z" fill="#f4fafc" stroke="#1f5c8a" stroke-width="0.9" stroke-linejoin="round"/><path d="M870.00 281.00v-3.8l3.2-3.2l3.4 2.8v4.2z" fill="#eef8f6" stroke="#6aaea2" stroke-width="0.8"/><path d="M870.00 277.20l3 1.4l3.6-1.8M873.00 278.60v2.4" stroke="#6aaea2" stroke-width="0.6" fill="none"/><circle cx="875.80" cy="279.80" r="1.9" fill="#6aaea2" stroke="#e6f4f2" stroke-width="0.5"/><path d="M1013.2 275.00l2.6 2.8l-2.6 2.8" stroke="#555" stroke-width="0.8" fill="none"/><path d="M869.40 292.80c2.4-3.9 6.4-3.9 8.8 0c-2.4 3.9-6.4 3.9-8.8 0z" fill="#1d4468"/><circle cx="873.80" cy="292.80" r="1.9" fill="#e6eef4"/><circle cx="873.80" cy="292.80" r="1.1" fill="#1d4468"/><path d="M889.40 293.20l3.6-3.8l3.6 3.8l-3.6 3.4z" fill="#f2f6f9" stroke="#5d7f99" stroke-width="0.7"/><path d="M889.60 293.40h6.8l-3.4 3.2z" fill="#2f6f9f"/><path d="M893.00 289.40v-1.4" stroke="#5d7f99" stroke-width="0.7"/><circle cx="897.00" cy="296.40" r="0.9" fill="#1d4468"/><path d="M951.8 292.00l1.9 1.9l1.9-1.9" stroke="#aaa" stroke-width="0.7" fill="none"/><rect x="963.6" y="288.50" width="8.8" height="8.6" fill="#ee4444"/><rect x="978" y="289.80" width="6.2" height="6.2" fill="#1d4468"/><path d="M979.4 292.90l1.3 1.4l2.3-2.8" stroke="#fff" stroke-width="0.8" fill="none"/><rect x="986.8" y="288.50" width="9" height="8.6" fill="#4a90e2"/><path d="M893.6 307.00H943.50" stroke="#1d4468" stroke-width="3.2" stroke-linecap="round"/><circle cx="943.50" cy="307.00" r="3.3" fill="#1d4468"/><rect x="969.4" y="300.80" width="12.6" height="12.4" fill="#b9e2f6" stroke="#78c2e6" stroke-width="0.8"/><path d="M959.2 303.20v7.6l6.8-3.8z" fill="#1f5c8a"/><path d="M972.6 310.60l0.8-7.4h2.6l0.6 7.4z" fill="#f4f8fa" stroke="#7f99ab" stroke-width="0.7"/><path d="M977 304.00l3.4 3l-3.4 3z" fill="#a9c9bf" stroke="#6f9f93" stroke-width="0.6"/><path d="M986.4 303.20v7.6l6.6-3.8z" fill="#f4fafc" stroke="#1f5c8a" stroke-width="0.9" stroke-linejoin="round"/><path d="M870.00 325.00v-3.8l3.2-3.2l3.4 2.8v4.2z" fill="#eef8f6" stroke="#6aaea2" stroke-width="0.8"/><path d="M870.00 321.20l3 1.4l3.6-1.8M873.00 322.60v2.4" stroke="#6aaea2" stroke-width="0.6" fill="none"/><circle cx="875.80" cy="323.80" r="1.9" fill="#6aaea2" stroke="#e6f4f2" stroke-width="0.5"/><path d="M1013.2 319.00l2.6 2.8l-2.6 2.8" stroke="#555" stroke-width="0.8" fill="none"/><path d="M869.40 336.80c2.4-3.9 6.4-3.9 8.8 0c-2.4 3.9-6.4 3.9-8.8 0z" fill="#1d4468"/><circle cx="873.80" cy="336.80" r="1.9" fill="#e6eef4"/><circle cx="873.80" cy="336.80" r="1.1" fill="#1d4468"/><path d="M889.40 337.20l3.6-3.8l3.6 3.8l-3.6 3.4z" fill="#f2f6f9" stroke="#5d7f99" stroke-width="0.7"/><path d="M889.60 337.40h6.8l-3.4 3.2z" fill="#2f6f9f"/><path d="M893.00 333.40v-1.4" stroke="#5d7f99" stroke-width="0.7"/><circle cx="897.00" cy="340.40" r="0.9" fill="#1d4468"/><path d="M951.8 336.00l1.9 1.9l1.9-1.9" stroke="#aaa" stroke-width="0.7" fill="none"/><rect x="963.6" y="332.50" width="8.8" height="8.6" fill="#ee4444"/><rect x="978" y="333.80" width="6.2" height="6.2" fill="#1d4468"/><path d="M979.4 336.90l1.3 1.4l2.3-2.8" stroke="#fff" stroke-width="0.8" fill="none"/><rect x="986.8" y="332.50" width="9" height="8.6" fill="#4a90e2"/><path d="M893.6 351.00H943.50" stroke="#1d4468" stroke-width="3.2" stroke-linecap="round"/><circle cx="943.50" cy="351.00" r="3.3" fill="#1d4468"/><rect x="969.4" y="344.80" width="12.6" height="12.4" fill="#b9e2f6" stroke="#78c2e6" stroke-width="0.8"/><path d="M959.2 347.20v7.6l6.8-3.8z" fill="#1f5c8a"/><path d="M972.6 354.60l0.8-7.4h2.6l0.6 7.4z" fill="#f4f8fa" stroke="#7f99ab" stroke-width="0.7"/><path d="M977 348.00l3.4 3l-3.4 3z" fill="#a9c9bf" stroke="#6f9f93" stroke-width="0.6"/><path d="M986.4 347.20v7.6l6.6-3.8z" fill="#f4fafc" stroke="#1f5c8a" stroke-width="0.9" stroke-linejoin="round"/><path d="M870.00 363.80l3.6-1.8l3.6 1.8v4.2l-3.6 1.8l-3.6-1.8z" fill="#4f8fb4" stroke="#3b7ba0" stroke-width="0.5"/><path d="M870.00 363.80l3.6 1.8l3.6-1.8M873.60 365.60v4.2" stroke="#9cc8e0" stroke-width="0.5" fill="none"/><path d="M1013.2 363.00l2.6 2.8l-2.6 2.8" stroke="#555" stroke-width="0.8" fill="none"/><path d="M869.60 380.80c2.4-3.6 6-3.6 8.4 0c-2.4 3.6-6 3.6-8.4 0z" fill="none" stroke="#c9c9c9" stroke-width="0.7"/><circle cx="873.80" cy="380.80" r="1.4" fill="none" stroke="#c9c9c9" stroke-width="0.7"/><path d="M870.80 383.40l6-5.2" stroke="#c9c9c9" stroke-width="0.7"/><path d="M889.40 381.20l3.6-3.8l3.6 3.8l-3.6 3.4z" fill="#f2f6f9" stroke="#5d7f99" stroke-width="0.7"/><path d="M889.60 381.40h6.8l-3.4 3.2z" fill="#2f6f9f"/><path d="M893.00 377.40v-1.4" stroke="#5d7f99" stroke-width="0.7"/><circle cx="897.00" cy="384.40" r="0.9" fill="#1d4468"/><path d="M951.8 380.00l1.9 1.9l1.9-1.9" stroke="#aaa" stroke-width="0.7" fill="none"/><rect x="963.6" y="376.50" width="8.8" height="8.6" fill="#fff200"/><path d="M893.6 395.00H943.50" stroke="#1d4468" stroke-width="3.2" stroke-linecap="round"/><circle cx="943.50" cy="395.00" r="3.3" fill="#1d4468"/><rect x="956.6" y="388.80" width="12.6" height="12.4" fill="#b9e2f6" stroke="#78c2e6" stroke-width="0.8"/><path d="M959.2 391.20v7.6l6.8-3.8z" fill="#1f5c8a"/><path d="M972.6 398.60l0.8-7.4h2.6l0.6 7.4z" fill="#f4f8fa" stroke="#7f99ab" stroke-width="0.7"/><path d="M977 392.00l3.4 3l-3.4 3z" fill="#a9c9bf" stroke="#6f9f93" stroke-width="0.6"/><path d="M986.4 391.20v7.6l6.6-3.8z" fill="#f4fafc" stroke="#1f5c8a" stroke-width="0.9" stroke-linejoin="round"/><rect x="1012.4" y="391.00" width="3.6" height="8" fill="#e2e2e2"/><circle cx="1014.2" cy="392.80" r="0.6" fill="#666"/><circle cx="1014.2" cy="395.00" r="0.6" fill="#666"/><circle cx="1014.2" cy="397.20" r="0.6" fill="#666"/><path d="M870.00 407.80l3.6-1.8l3.6 1.8v4.2l-3.6 1.8l-3.6-1.8z" fill="#4f8fb4" stroke="#3b7ba0" stroke-width="0.5"/><path d="M870.00 407.80l3.6 1.8l3.6-1.8M873.60 409.60v4.2" stroke="#9cc8e0" stroke-width="0.5" fill="none"/><path d="M1013.2 407.00l2.6 2.8l-2.6 2.8" stroke="#555" stroke-width="0.8" fill="none"/><path d="M869.60 424.80c2.4-3.6 6-3.6 8.4 0c-2.4 3.6-6 3.6-8.4 0z" fill="none" stroke="#c9c9c9" stroke-width="0.7"/><circle cx="873.80" cy="424.80" r="1.4" fill="none" stroke="#c9c9c9" stroke-width="0.7"/><path d="M870.80 427.40l6-5.2" stroke="#c9c9c9" stroke-width="0.7"/><path d="M889.40 425.20l3.6-3.8l3.6 3.8l-3.6 3.4z" fill="#f2f6f9" stroke="#5d7f99" stroke-width="0.7"/><path d="M889.60 425.40h6.8l-3.4 3.2z" fill="#2f6f9f"/><path d="M893.00 421.40v-1.4" stroke="#5d7f99" stroke-width="0.7"/><circle cx="897.00" cy="428.40" r="0.9" fill="#1d4468"/><path d="M951.8 424.00l1.9 1.9l1.9-1.9" stroke="#aaa" stroke-width="0.7" fill="none"/><rect x="963.6" y="420.50" width="8.8" height="8.6" fill="#fff200"/><path d="M893.6 439.00H943.50" stroke="#1d4468" stroke-width="3.2" stroke-linecap="round"/><circle cx="943.50" cy="439.00" r="3.3" fill="#1d4468"/><rect x="956.6" y="432.80" width="12.6" height="12.4" fill="#b9e2f6" stroke="#78c2e6" stroke-width="0.8"/><path d="M959.2 435.20v7.6l6.8-3.8z" fill="#1f5c8a"/><path d="M972.6 442.60l0.8-7.4h2.6l0.6 7.4z" fill="#f4f8fa" stroke="#7f99ab" stroke-width="0.7"/><path d="M977 436.00l3.4 3l-3.4 3z" fill="#a9c9bf" stroke="#6f9f93" stroke-width="0.6"/><path d="M986.4 435.20v7.6l6.6-3.8z" fill="#f4fafc" stroke="#1f5c8a" stroke-width="0.9" stroke-linejoin="round"/><rect x="1012.4" y="435.00" width="3.6" height="8" fill="#e2e2e2"/><circle cx="1014.2" cy="436.80" r="0.6" fill="#666"/><circle cx="1014.2" cy="439.00" r="0.6" fill="#666"/><circle cx="1014.2" cy="441.20" r="0.6" fill="#666"/></svg>
<div class="b" style="left:861.00px;top:285.00px;width:1.60px;height:11.00px;background:#c6c6ca;"></div>
<div class="b" style="left:863.60px;top:446.60px;width:152.40px;height:1.60px;background:#d0d0d0;"></div>
<div class="b" style="left:943.00px;top:446.20px;width:11.00px;height:2.20px;background:#9c9c9c;"></div>
<div class="b" style="left:864.60px;top:448.20px;width:151.40px;height:78.60px;background:#fafafa;"></div>
<svg width="1024" height="574"><path d="M875 452.6l3.5 2v4l-3.5 2l-3.5-2v-4z" fill="#f5d24a" stroke="#ecc636" stroke-width="0.6"/><text x="875" y="458.2" font-size="4.4" font-weight="bold" text-anchor="middle" fill="#7a5a10" font-family="Liberation Sans">S</text></svg>
<div class="t" style="left:881.60px;top:454.35px;font-size:6.6px;color:#2a2a2a;font-weight:bold;transform:scaleX(1.0144);">-170</div>
<div class="t" style="left:870.60px;top:468.47px;font-size:6.4px;color:#444;transform:scaleX(0.9570);">Slice mode:</div>
<div class="b" style="left:907.40px;top:464.80px;width:120.00px;height:12.60px;background:#ffffff;border:1px solid #dcdcdc;"></div>
<div class="t" style="left:912.00px;top:468.47px;font-size:6.4px;color:#444;transform:scaleX(0.9639);">From Scene</div>
<div class="b" style="left:863.60px;top:526.20px;width:152.40px;height:1.20px;background:#bdbdbd;"></div>
<div class="b" style="left:31.00px;top:527.20px;width:985.00px;height:15.40px;background:#ececec;"></div>
<svg width="1024" height="574"><g fill="none" stroke="#555" stroke-width="0.7"><path d="M633.6 530.6v7.4h7.2"/><path d="M633.6 538l5.4-4.6" stroke="#c33"/><path d="M632.4 532l1.2-1.6l1.2 1.6M639.4 536.8l1.6 1.2l-1.6 1.2"/></g><g fill="none" stroke="#4a7a9a" stroke-width="0.8"><path d="M762 538.6l1-3.4l5.2-5.2l2.4 2.4l-5.2 5.2z"/></g><rect x="852" y="531.2" width="7.4" height="5" fill="#5fa892"/><path d="M853.6 538.2h4.2" stroke="#5fa892" stroke-width="0.9"/><g fill="none" stroke="#9cc8be" stroke-width="0.8"><path d="M979.2 530.4v9"/><path d="M977 532.6l2.2-2.4l2.2 2.4M977 537.2l2.2 2.4l2.2-2.4"/></g></svg>
<div class="t" style="left:773.60px;top:532.67px;font-size:6.4px;color:#444;font-style:italic;transform:scaleX(0.9042);">&lt;No Code&gt;</div>
<div class="t" style="left:862.60px;top:532.67px;font-size:6.4px;color:#444;transform:scaleX(0.9881);">Full Acceleration</div>
<div class="t" style="left:932.20px;top:532.67px;font-size:6.4px;color:#444;transform:scaleX(0.9636);">100+ FPS</div>
<div class="t" style="left:986.20px;top:532.67px;font-size:6.4px;color:#444;transform:scaleX(0.9106);">Z-Scale 1.0</div>
<div class="b" style="left:31.00px;top:542.60px;width:985.00px;height:15.00px;background:#1b1b1b;"></div>
<div class="b" style="left:440.60px;top:542.60px;width:25.00px;height:15.00px;background:#4a4a4a;"></div>
<svg width="1024" height="574"><defs><clipPath id="ct"><rect x="31" y="542.6" width="985" height="15"/></clipPath></defs><g clip-path="url(#ct)"><rect x="37.75" y="548.15" width="3.9" height="3.9" fill="#f4f4f4" /><rect x="37.75" y="552.75" width="3.9" height="3.9" fill="#f4f4f4" /><rect x="42.35" y="548.15" width="3.9" height="3.9" fill="#f4f4f4" /><rect x="42.35" y="552.75" width="3.9" height="3.9" fill="#f4f4f4" /><circle cx="68.8" cy="551.4" r="4.4" fill="none" stroke="#f4f4f4" stroke-width="1.3"/><path d="M65.6 554.8l-3.4 3.8" stroke="#f4f4f4" stroke-width="1.4"/><g fill="none" stroke="#d8d8d8" stroke-width="0.9"><rect x="90" y="549.6" width="5" height="6"/><path d="M88.4 549.6v6M96.6 549.6v6M90 548h5M90 557.2h5"/></g><circle cx="119.2" cy="553" r="6.2" fill="#e24a3a"/><path d="M119.2 553L113.6 550A6.2 6.2 0 0 0 116 558.4z" fill="#3aa757"/><path d="M119.2 553L116 558.4A6.2 6.2 0 0 0 125.2 551.4z" fill="#f7c52b"/><circle cx="119.2" cy="553" r="2.9" fill="#fff"/><circle cx="119.2" cy="553" r="2.2" fill="#4a8af4"/><circle cx="145" cy="553" r="6" fill="#1b7fd4"/><path d="M139.4 551.6a6 6 0 0 1 11.4-0.6c-2-2-6-2.4-8 0z" fill="#4fd08a"/><path d="M142.4 553.6a3.2 3.2 0 0 0 5 2.6" stroke="#0a4f9a" stroke-width="1.6" fill="none"/><path d="M167.6 548.4l6.6-1.4l2.4 7l-6 2.4z" fill="#2f95e8"/><path d="M166 556.6l8-2.4l3 3.4z" fill="#d8dde2"/><rect x="190" y="548.4" width="12.4" height="10" fill="#f4c542"/><rect x="190" y="547.4" width="5" height="2" fill="#e0a820"/><rect x="192.6" y="552.4" width="7.4" height="6" fill="#6fb4e8"/><rect x="216" y="547.8" width="8" height="10" fill="#1272c4"/><rect x="222" y="549" width="6.4" height="8" fill="#e8f0f8"/><text x="220" y="556" font-size="6.4" font-weight="bold" fill="#fff" text-anchor="middle" font-family="Liberation Sans">O</text><path d="M224 552l1.4 1.6l2.2-2.6" stroke="#1272c4" stroke-width="0.7" fill="none"/><rect x="246" y="548.2" width="7.4" height="10" fill="#e8eef6"/><rect x="241.8" y="549.2" width="7.4" height="9" fill="#2b579a"/><text x="245.5" y="556.4" font-size="5.8" font-weight="bold" fill="#fff" text-anchor="middle" font-family="Liberation Sans">W</text><rect x="272" y="548.2" width="6.6" height="10" fill="#cfe8d8"/><rect x="267.4" y="549.2" width="7.4" height="9" fill="#1e7145"/><text x="271.1" y="556.4" font-size="5.8" font-weight="bold" fill="#fff" text-anchor="middle" font-family="Liberation Sans">X</text><rect x="294.4" y="546.8" width="8.8" height="12" fill="#f2f2f2"/><rect x="295.4" y="547.8" width="6.8" height="2" fill="#8a8a8a"/><g fill="#555"><rect x="295.6" y="551" width="1.6" height="1.5"/><rect x="298" y="551" width="1.6" height="1.5"/><rect x="300.4" y="551" width="1.6" height="1.5"/><rect x="295.6" y="553.6" width="1.6" height="1.5"/><rect x="298" y="553.6" width="1.6" height="1.5"/><rect x="300.4" y="553.6" width="1.6" height="1.5"/><rect x="295.6" y="556.2" width="1.6" height="1.5"/><rect x="298" y="556.2" width="1.6" height="1.5"/><rect x="300.4" y="556.2" width="1.6" height="1.5"/></g><rect x="318.6" y="547" width="12" height="11" fill="#f4f2f2"/><text x="324.6" y="557.2" font-size="10" font-weight="bold" fill="#d02030" text-anchor="middle" font-family="Liberation Sans">A</text><circle cx="350" cy="553.6" r="6.2" fill="#3f86d8"/><circle cx="350" cy="553.6" r="3" fill="#f2d48a"/><circle cx="350" cy="553.6" r="6.2" fill="none" stroke="#8fc0f0" stroke-width="1"/><rect x="370.4" y="547.4" width="10" height="11" fill="#e8f4e0"/><rect x="371.2" y="552" width="8.4" height="6.4" fill="#6fbf3a"/><path d="M371.4 549l3 3.4l5.8-5" stroke="#e8a820" stroke-width="1.1" fill="none"/><rect x="401" y="548.2" width="6.8" height="10" fill="#f6d8cf"/><rect x="396.6" y="549.2" width="7.4" height="9" fill="#d24726"/><text x="400.3" y="556.4" font-size="5.8" font-weight="bold" fill="#fff" text-anchor="middle" font-family="Liberation Sans">P</text><g fill="#2f9fe8"><circle cx="426.2" cy="549.6" r="2.8"/><circle cx="423.2" cy="554.4" r="2.8"/><circle cx="429.2" cy="554.4" r="2.8"/><circle cx="420.8" cy="558.8" r="2.4"/><circle cx="426.2" cy="558.8" r="2.4"/><circle cx="431.59999999999997" cy="558.8" r="2.4"/></g><g fill="#2f9fe8"><circle cx="478.8" cy="549.6" r="2.8"/><circle cx="475.8" cy="554.4" r="2.8"/><circle cx="481.8" cy="554.4" r="2.8"/><circle cx="473.40000000000003" cy="558.8" r="2.4"/><circle cx="478.8" cy="558.8" r="2.4"/><circle cx="484.2" cy="558.8" r="2.4"/></g><circle cx="453.2" cy="552.6" r="5.2" fill="#f4f4f4"/><path d="M450.4 552a1.4 1.4 0 1 0 2.6 0.4M453.6 555.4l2.6-2.8M450.8 556l1.8-1.4" stroke="#333" stroke-width="1.1" fill="none"/><rect x="498.2" y="546.8" width="11.6" height="12" fill="none" stroke="#f0f0f0" stroke-width="1"/><path d="M498.8 558l3.6-6l2.4 3l2-2.4l3 5z" fill="#f4f4f4"/><circle cx="529.4" cy="553.6" r="6" fill="none" stroke="#f0f0f0" stroke-width="1.2"/><path d="M524 557l3.8-5l2.6 3l1.8-1.8l3 4z" fill="#f4f4f4"/><circle cx="527" cy="550.6" r="1" fill="#f4f4f4"/></g></svg>
<div class="t" style="left:1010.60px;top:544.18px;font-size:6.2px;color:#f2f2f2;">11</div>
<div class="b" style="left:31.00px;top:542.60px;width:985.00px;height:15.00px;overflow:hidden;"><div class="t" style="left:973.40px;top:11.49px;font-size:6px;color:#e8e8e8;">28.0</div></div>
<div class="b" style="left:1016.00px;top:0.00px;width:8.00px;height:574.00px;background:#ffffff;"></div>
<div class="b" style="left:0.00px;top:557.60px;width:1024.00px;height:17.00px;background:#ffffff;"></div>
<div class="b" style="left:0.00px;top:0.00px;width:31.00px;height:574.00px;background:#ffffff;"></div>
<div class="b" style="left:77.20px;top:358.40px;width:114.60px;height:107.60px;background:#fdfdfd;box-shadow:0 0.5px 2.5px rgba(0,0,0,0.35);"></div>
<div class="b" style="left:77.20px;top:359.20px;width:114.60px;height:13.40px;background:#bfe2f6;"></div>
<div class="b" style="left:81.00px;top:429.60px;width:106.60px;height:0.80px;background:#e2e2e2;"></div>
<div class="b" style="left:81.00px;top:447.40px;width:106.60px;height:0.80px;background:#e2e2e2;"></div>
<div class="t" style="left:94.50px;top:363.17px;font-size:6.4px;color:#3a3a3a;transform:scaleX(0.9824);">New Cross Section From Image</div>
<div class="t" style="left:94.50px;top:376.97px;font-size:6.4px;color:#3a3a3a;transform:scaleX(0.9610);">New Cross Section</div>
<div class="t" style="left:94.50px;top:390.47px;font-size:6.4px;color:#3a3a3a;transform:scaleX(0.9703);">New Long Section</div>
<div class="t" style="left:94.50px;top:403.97px;font-size:6.4px;color:#3a3a3a;transform:scaleX(0.9562);">New Serial Section</div>
<div class="t" style="left:94.50px;top:417.67px;font-size:6.4px;color:#3a3a3a;transform:scaleX(0.9813);">New Contour Lines From Surface</div>
<div class="t" style="left:94.50px;top:435.87px;font-size:6.4px;color:#3a3a3a;transform:scaleX(0.9912);">Batch Export Layouts</div>
<div class="t" style="left:94.50px;top:454.07px;font-size:6.4px;color:#3a3a3a;transform:scaleX(0.9814);">New Subfolder</div>
<svg width="1024" height="574"><path d="M166.13 368.90H167.87" stroke="#444" stroke-width="0.6"/><path d="M86.30 361.90l3.4 1.9v3.8l-3.4 1.9l-3.4-1.9v-3.8z" fill="#f5d24a" stroke="#ecc636" stroke-width="0.6"/><text x="86.30" y="367.20" font-size="4.4" font-weight="bold" text-anchor="middle" fill="#7a5a10" font-family="Liberation Sans">S</text><path d="M94.50 382.70H98.94" stroke="#444" stroke-width="0.6"/><path d="M86.30 375.70l3.4 1.9v3.8l-3.4 1.9l-3.4-1.9v-3.8z" fill="#f5d24a" stroke="#ecc636" stroke-width="0.6"/><text x="86.30" y="381.00" font-size="4.4" font-weight="bold" text-anchor="middle" fill="#7a5a10" font-family="Liberation Sans">S</text><path d="M108.65 396.20H112.10" stroke="#444" stroke-width="0.6"/><path d="M82.50 389.60h5.4l2.2 2v1.6h-7.6z" fill="#f2b824"/><path d="M82.50 393.80h7.6v3h-7.6z" fill="#f5d24a"/><path d="M82.50 392.60h7.6" stroke="#c88a10" stroke-width="0.7"/><path d="M108.44 409.70H112.52" stroke="#444" stroke-width="0.6"/><path d="M82.70 404.50l3.6-1.8l3.6 1.8v4.2l-3.6 1.8l-3.6-1.8z" fill="#f2c22c"/><path d="M87.90 406.90v2.4" stroke="#7a5a10" stroke-width="0.9"/><path d="M108.81 423.40H113.34" stroke="#444" stroke-width="0.6"/><rect x="82.50" y="416.60" width="7.6" height="7.2" fill="#eef0e0" stroke="#d8d8c0" stroke-width="0.5"/><ellipse cx="86.70" cy="420.40" rx="2.4" ry="1.6" fill="none" stroke="#e0b840" stroke-width="0.6"/><path d="M82.90 422.80l6-5.6" stroke="#b8c8a0" stroke-width="0.6"/><g fill="none" stroke="#2f6f9f" stroke-width="0.9"><path d="M83.30 439.80v-2.6h5.6"/><path d="M87.10 435.00l2.2 2.2l-2.2 2.2"/><path d="M82.50 442.00h7.6" stroke-width="0.7"/></g><path d="M102.53 459.80H107.07" stroke="#444" stroke-width="0.6"/><path d="M82.20 453.60h2.9l0.9 1h4.4v5.4h-8.2z" fill="#fbfbfb" stroke="#b4b4b4" stroke-width="0.7"/><g fill="none" stroke="#c8102e" stroke-width="2.3" stroke-linecap="round"><path d="M89 372.8C100 373.4 112 372.6 124.4 371.4"/><path d="M42 473.2C51 473.4 61 472.6 70.6 471.2"/><path d="M73 485.4C79 485.8 86 485.4 92.8 484.4"/></g></svg>
</div></body></html>
